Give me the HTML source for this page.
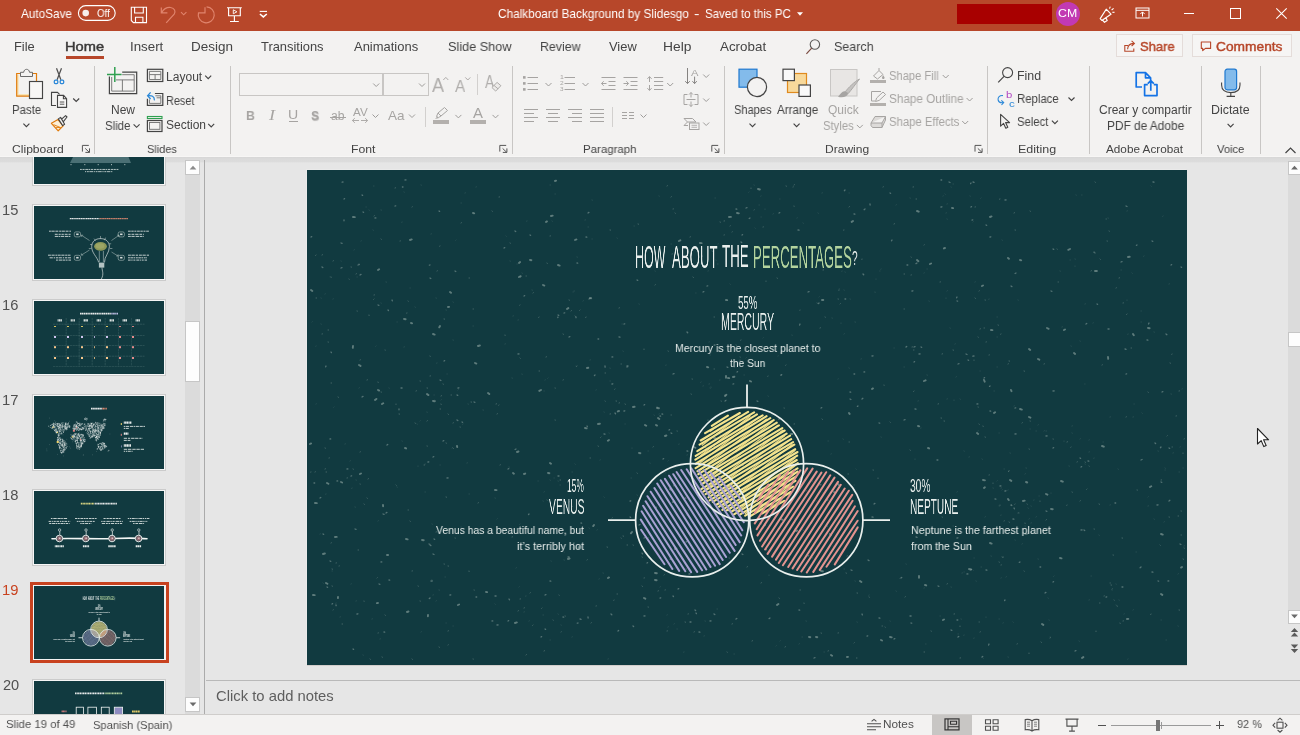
<!DOCTYPE html>
<html lang="en"><head><meta charset="utf-8"><title>PowerPoint</title><style>html,body{margin:0;padding:0}
body{width:1300px;height:735px;overflow:hidden;background:#E6E6E6;position:relative;font-family:"Liberation Sans",sans-serif}
.t{position:absolute;white-space:nowrap;transform-origin:0 50%;line-height:1;display:block;will-change:transform}
.r{position:absolute;display:block}
svg{overflow:visible}
</style></head><body>
<div class="r" style="left:0px;top:157px;width:1300px;height:5.5px;background:linear-gradient(#D6D6D6,#DADADA 25%,#DCDCDC 75%,#E6E6E6);"></div>
<div class="r" style="left:307px;top:170px;width:880px;height:495px;background:#113A40;overflow:hidden;box-shadow:-1px -1px 0 #EAEAEA, 0 1px 0 #D2CDCB"><svg class="r" style="left:0;top:0" width="880" height="495" viewBox="0 0 880 495"><g fill="none" stroke="#9FB2AD" stroke-linecap="round"><path stroke-width="0.8" opacity="0.25" d="M707 236l0.2 -0.1M712 343l0.3 -0.0M650 322l0.3 -0.2M206 146l0.3 -0.1M496 53l0.3 0.2M361 457l0.2 -0.1M876 298l0.2 -0.0M324 308l0.4 0.0M763 90l0.3 0.0M531 209l0.2 -0.1M154 357l0.2 0.0M237 221l0.2 0.0M856 46l-0.2 0.3M608 289l0.0 0.3M315 154l0.2 -0.0M643 158l0.2 0.1M792 365l0.2 0.3M423 114l0.2 0.2M56 485l0.2 0.1M864 224l0.4 0.1M120 225l0.3 0.1M701 487l0.3 0.1M9 234l0.2 -0.1M614 258l-0.3 0.1M573 101l-0.2 0.0M25 401l0.3 0.0M353 397l0.2 -0.2M26 129l0.2 -0.1M639 128l-0.0 0.3M620 99l0.2 -0.0M453 282l0.2 -0.1M139 140l0.3 0.1M617 418l0.3 -0.1M811 299l0.3 0.2M673 201l0.2 -0.0M9 176l-0.1 0.2M297 327l0.2 0.2M851 281l0.3 0.1M526 376l0.1 0.3M401 101l0.3 -0.1M655 403l0.4 -0.1M238 210l0.2 -0.1M162 324l0.3 0.0M188 328l0.3 0.1M343 77l-0.2 0.1M74 40l0.4 0.1M120 242l0.1 0.3M727 330l-0.3 0.1M841 327l0.2 -0.2M454 26l-0.2 0.1M367 454l0.3 -0.2M59 37l0.2 -0.0M633 446l0.3 0.0M292 409l0.2 -0.1M79 112l0.4 0.1M694 408l0.2 -0.1M719 298l0.4 0.1M67 16l-0.4 0.0M140 204l0.2 0.0M690 357l0.2 -0.1M268 294l0.2 0.2M657 281l0.2 0.1M473 471l0.2 -0.2M515 23l0.3 -0.1M775 25l-0.3 0.0M241 208l-0.2 0.2M199 66l0.2 0.2M65 449l0.3 -0.1M646 14l0.4 -0.0M768 89l0.3 0.1M443 358l-0.0 0.2M731 389l0.3 0.1M619 474l-0.3 0.0M127 225l0.2 0.0M499 451l0.3 0.1M243 470l0.3 0.0M283 190l0.3 -0.1M133 295l0.2 -0.0M455 176l0.2 -0.1M814 100l0.3 0.0M654 449l0.3 0.1M829 382l0.3 -0.0M156 254l-0.3 0.2M753 101l0.3 0.1M548 411l0.2 0.1M203 91l0.3 0.1M821 489l-0.2 0.1M778 134l0.3 -0.1M786 153l0.2 -0.1M875 219l0.2 -0.1M410 439l0.4 0.0M676 488l0.3 0.2M360 445l0.2 -0.1M158 23l0.3 -0.1M154 33l0.3 -0.0M826 247l0.4 -0.1M583 451l0.2 0.1M202 297l0.3 0.1M393 294l0.4 -0.0M695 70l0.3 0.2M49 431l0.3 -0.1M366 304l0.3 0.2M611 231l0.3 -0.1M548 152l0.4 0.1M772 471l0.3 0.2M215 204l0.1 0.3M245 51l0.3 0.2M871 404l0.3 -0.2M731 255l0.3 -0.2M778 214l-0.2 0.0M358 303l0.3 -0.1M44 414l0.2 -0.1M457 261l0.2 -0.1M265 302l0.3 0.0M663 26l0.2 0.1M694 318l0.4 -0.1M662 287l0.3 -0.1M550 452l0.2 0.1M285 69l0.2 -0.0M230 362l0.2 0.1M90 152l0.2 0.0M485 165l0.1 0.3M266 122l0.2 0.0M97 177l0.3 -0.1M536 269l0.3 0.2M682 129l-0.1 0.3M859 470l0.4 0.0M844 16l0.2 0.2M364 74l0.3 0.0M666 400l0.2 0.2M524 284l0.2 -0.1M290 360l0.3 -0.2M589 35l0.3 -0.2M495 467l0.3 0.0M439 188l0.2 -0.2M125 354l0.2 0.1M129 431l0.3 -0.2M671 261l0.2 -0.1M352 26l0.2 0.1M409 90l0.1 0.2M835 243l0.2 0.2M834 141l0.3 -0.0M54 71l0.2 -0.1M267 121l0.4 -0.0M611 375l0.3 -0.0M359 195l-0.1 0.3M862 114l0.3 -0.1M408 28l0.3 -0.0M674 28l-0.2 0.2M402 214l0.4 -0.1M796 272l0.3 -0.0M542 23l0.3 -0.0M169 17l0.3 -0.1M303 211l0.3 -0.0M465 245l0.0 0.4M190 349l0.2 -0.2M330 325l0.3 0.2M538 102l0.2 0.1M160 293l0.3 -0.1M589 421l0.3 0.2M18 124l0.2 -0.1M14 154l0.2 0.1M768 96l-0.0 0.3M130 193l-0.3 0.1M521 271l0.3 -0.0M871 456l0.2 0.1M146 170l0.3 0.1M281 57l0.4 0.0M361 291l0.2 -0.2M535 101l-0.1 0.3M210 94l0.2 0.0M636 26l0.2 -0.1M301 489l0.3 -0.1M396 216l0.3 -0.1M471 186l0.2 -0.1M5 152l0.2 -0.2M236 331l0.2 0.1M653 229l0.3 0.2M111 296l-0.0 0.3M327 56l0.3 0.0M316 181l0.2 0.3M469 476l0.2 -0.2M149 70l-0.2 0.2M248 24l0.3 0.0M282 358l0.3 0.2M640 229l0.3 -0.1M858 300l0.2 0.0M278 50l0.4 -0.1M668 112l0.2 -0.1M697 299l0.3 -0.0M812 430l0.2 0.1M490 48l0.2 -0.1M416 385l0.2 -0.0M469 288l0.4 0.1M825 103l0.2 0.2M742 450l0.2 0.1M463 278l-0.2 0.3M198 174l0.3 -0.1M391 379l0.3 0.1M166 156l0.3 -0.0M302 263l0.2 0.1M332 134l0.2 0.1M209 398l0.3 -0.2M462 405l-0.0 0.4M71 351l0.3 -0.2M389 123l-0.2 0.0M114 462l0.3 -0.2M837 86l-0.3 0.2M747 406l-0.3 0.3M809 414l0.2 0.1M803 335l0.3 -0.1M270 87l0.3 0.1M48 337l0.3 0.1M269 196l0.2 -0.0M678 347l0.3 -0.2M549 299l0.2 0.2M52 218l0.3 -0.2M237 322l0.3 -0.2M348 101l0.2 0.1M769 25l0.2 0.1M640 121l0.3 -0.2M711 130l0.2 0.1M427 484l0.3 0.0M397 278l0.2 -0.1M118 294l0.3 -0.0M459 313l0.0 0.3M404 217l0.2 0.1M782 282l0.3 -0.1M403 218l0.4 0.1M724 336l0.2 0.1M95 52l-0.1 0.3M743 467l0.3 0.0M512 127l0.2 -0.2M537 120l0.2 0.1M411 94l-0.4 0.0M784 406l0.3 0.0M646 356l0.3 0.0M456 168l0.2 -0.2M757 271l0.0 0.3M171 176l0.2 0.1M243 15l0.4 -0.0M847 162l0.3 0.1M820 130l0.0 0.3M448 88l-0.3 0.2M97 22l0.2 0.1M113 251l0.2 -0.2M69 176l-0.2 0.2M253 315l0.3 -0.0M211 150l0.4 -0.1M394 212l-0.2 0.3M574 267l0.2 0.1M599 394l0.2 0.1M593 408l-0.3 0.3M841 336l0.4 -0.1M765 256l0.3 -0.1M377 482l-0.3 0.1M285 30l0.3 0.1M724 353l0.3 -0.1M205 208l0.3 0.1M475 77l0.2 0.2M773 269l0.3 -0.2M213 354l-0.3 0.3M803 247l0.4 -0.1M827 234l0.2 -0.0M146 132l0.3 0.2M603 28l0.3 0.1M547 315l0.4 0.0M554 189l0.3 -0.1M854 450l0.3 0.0M773 171l0.2 0.1M73 469l0.3 -0.1M310 68l0.3 0.2M647 230l-0.0 0.4M762 296l0.3 0.1M542 198l0.2 0.1M452 35l0.3 0.0M379 345l0.3 0.1M532 119l0.3 -0.1M511 43l0.3 0.2M124 64l0.3 -0.1M27 237l-0.2 0.2M293 290l0.2 -0.1M220 51l-0.3 0.1M737 261l0.3 -0.2M765 263l0.2 0.1M739 261l0.4 -0.0M368 298l0.2 0.1M380 285l0.3 -0.1M648 174l0.2 -0.1M139 453l0.2 -0.0M146 456l0.2 -0.0M45 318l-0.2 0.4M43 291l0.3 -0.2M257 382l0.2 0.1M257 390l0.3 0.1M244 391l0.2 0.1M516 323l0.4 -0.1M490 348l0.2 -0.0M509 331l0.4 -0.0M666 52l0.2 -0.2M639 43l0.3 -0.1M640 49l0.2 0.1M296 403l0.3 0.1M877 376l0.3 -0.1M695 320l0.2 -0.2M694 345l-0.1 0.3M692 336l0.3 0.1M729 261l0.3 -0.0M723 259l0.2 -0.0M353 417l0.3 -0.2M352 244l0.2 -0.1M347 245l0.3 0.2M289 220l0.2 -0.1M303 198l0.1 0.3M392 323l0.3 0.2M82 218l0.2 0.1M741 428l0.3 0.2M706 452l0.2 0.2M447 15l0.2 0.1M442 22l-0.2 0.2M14 128l0.2 0.1M692 263l0.2 0.0M525 148l0.3 0.1M534 153l0.0 0.3M690 311l0.2 -0.2M703 283l0.3 0.1M686 318l0.3 0.1M718 304l0.3 -0.2M764 176l0.2 0.1M755 157l0.3 -0.1M138 407l0.3 0.0M132 420l0.4 0.1M254 455l0.2 0.1M251 444l0.3 0.2M126 425l0.3 -0.1M699 407l0.3 -0.2M16 413l0.2 0.2M370 398l0.2 -0.1M692 449l0.3 -0.0M696 453l0.2 -0.1M617 103l0.2 -0.1M318 254l0.2 -0.0M297 242l0.2 0.1M569 109l-0.0 0.2M568 122l0.1 0.4M574 99l-0.1 0.2M265 467l0.2 -0.1M19 324l-0.3 0.1M873 277l0.2 -0.1M858 298l0.3 0.2M276 131l0.3 -0.2M23 107l0.3 0.1M675 289l0.3 0.2M393 310l0.3 -0.1M343 293l0.1 0.2M372 274l-0.1 0.3M325 278l0.0 0.2M341 281l0.3 -0.0M66 60l0.3 0.2M62 40l0.3 0.2M701 320l-0.1 0.2M847 349l0.3 0.2M857 352l0.3 -0.2M667 468l-0.1 0.3M657 465l-0.1 0.3M398 451l0.3 0.1M397 466l0.3 -0.1M455 376l0.4 -0.1M478 348l0.4 -0.1M487 348l0.1 0.2M411 74l0.2 -0.1M256 329l0.4 0.0M231 311l0.2 0.0M423 310l0.3 -0.1M413 319l0.2 0.3M427 329l-0.2 0.1M826 440l0.3 -0.2M817 444l0.2 -0.1M821 164l-0.1 0.3M834 152l0.3 0.0M114 15l0.3 0.1M448 58l0.2 0.2M134 230l0.2 -0.2M128 230l0.2 0.2M151 220l0.2 -0.2M236 445l0.4 0.0M219 426l-0.4 0.1M212 417l0.2 -0.2M620 205l0.3 0.1M649 207l0.3 -0.2M215 103l0.3 0.2M403 185l0.4 -0.0M402 172l0.3 -0.1M477 284l0.3 0.0M473 270l0.3 -0.1M95 271l0.2 0.1M110 254l0.2 0.1M217 442l0.3 -0.1M222 451l0.2 -0.1M416 241l0.4 -0.1M414 243l0.4 0.0M419 230l0.3 0.0M13 364l0.2 -0.1M690 147l0.3 0.0M690 167l0.3 0.0M329 360l-0.2 0.1M418 295l-0.1 0.2M29 433l-0.1 0.3M33 447l0.3 -0.1M461 226l0.3 0.2M721 338l0.3 0.2M729 347l0.3 -0.2M732 326l0.2 -0.0M744 323l-0.0 0.2M247 308l0.2 0.0M243 310l0.3 0.2M251 311l0.3 0.1M562 425l-0.1 0.2M537 399l0.3 0.0M820 41l0.3 -0.1M801 48l0.3 0.1M787 288l-0.1 0.3M778 294l0.2 0.1M782 270l0.2 -0.1M517 482l0.3 -0.0M492 474l0.3 -0.2M437 205l0.3 0.0M413 210l-0.4 0.1M368 398l0.2 -0.1M587 178l0.2 0.0M597 197l0.3 0.0M118 322l0.3 0.0M90 317l0.2 0.1M74 133l0.2 0.1M103 118l0.2 0.0M108 137l0.3 0.2M129 128l0.3 0.1M145 278l0.3 -0.2M622 131l0.1 0.2M493 350l0.1 0.2M49 310l0.3 0.1M872 302l0.4 -0.0M866 283l0.3 -0.1M458 39l-0.0 0.3M454 47l0.2 0.0M466 44l0.3 -0.2M809 435l0.2 0.1M805 420l0.3 -0.0M782 430l0.3 -0.1M38 274l0.3 -0.1M687 221l0.3 0.0M690 197l0.3 0.0M640 34l0.3 -0.1M638 24l0.2 0.2M644 17l0.2 0.1M679 447l0.0 0.3M651 464l0.3 0.0M705 362l-0.1 0.2M722 349l0.3 -0.2M718 356l0.4 0.1M715 374l0.3 -0.2M708 370l0.2 0.1M433 283l0.2 -0.1M427 362l0.3 -0.1M411 365l0.1 0.2M684 386l0.3 0.1M657 402l0.2 -0.0M473 29l-0.2 0.0M669 411l0.2 0.1M674 397l0.4 -0.0M667 388l0.2 -0.0M176 240l0.4 0.1M161 234l0.3 0.1M537 164l0.3 -0.2M543 129l0.3 0.1M225 120l0.3 0.1M34 91l0.2 0.1M50 107l0.2 0.0M47 80l0.3 -0.2M370 459l0.2 -0.0M644 417l0.3 0.1M188 434l0.2 0.2"/><path stroke-width="1.0" opacity="0.36" d="M739 350l0.5 -0.4M498 98l0.4 -0.3M237 481l0.6 -0.3M8 302l0.4 -0.2M542 37l0.5 -0.4M265 336l0.2 0.4M819 247l0.4 -0.2M379 399l0.6 0.1M597 139l0.4 0.0M710 474l0.4 -0.2M860 266l0.3 -0.3M444 18l0.0 0.5M250 358l0.5 0.2M108 253l0.5 0.3M470 108l0.5 0.3M205 367l0.6 -0.2M812 108l0.6 -0.2M300 377l0.6 0.2M717 201l0.6 0.2M9 128l0.6 0.0M370 261l0.4 0.1M493 140l-0.1 0.3M512 358l0.1 0.4M420 482l0.3 0.2M800 71l0.5 0.1M123 206l0.5 -0.1M603 280l0.4 0.3M219 485l0.5 -0.4M105 401l0.5 -0.1M133 76l-0.4 0.2M289 436l0.4 -0.1M103 351l0.3 0.4M813 453l0.2 0.5M415 362l0.5 0.3M162 108l0.5 0.0M693 29l-0.6 0.2M723 41l0.5 0.3M364 245l0.4 0.0M331 54l0.6 0.2M555 89l-0.1 0.5M280 390l0.4 -0.3M454 354l0.5 0.1M320 375l0.6 0.0M153 257l0.4 0.1M270 196l-0.4 0.5M609 29l0.6 -0.0M365 84l0.4 -0.1M634 248l0.6 0.1M778 292l0.5 0.3M707 43l0.6 -0.3M692 392l0.4 0.2M531 129l0.5 0.1M478 392l0.5 -0.1M877 378l0.4 0.2M368 43l0.4 0.3M335 387l0.4 0.2M598 427l0.4 -0.3M499 321l0.4 -0.2M824 178l0.6 0.0M773 331l0.4 -0.3M130 101l0.4 -0.2M262 332l0.4 -0.3M682 185l0.4 -0.1M53 190l0.4 -0.2M239 187l0.5 -0.2M21 172l0.5 0.1M164 232l0.6 0.1M120 251l0.4 -0.3M533 134l0.4 -0.4M479 195l-0.4 0.3M70 408l0.3 -0.3M701 194l0.4 -0.2M816 133l0.5 -0.1M765 322l0.4 0.2M863 193l0.5 0.2M154 53l0.5 -0.3M360 16l0.5 -0.3M484 325l-0.4 0.2M105 37l0.3 -0.2M637 251l0.6 0.1M312 138l0.5 -0.2M93 71l0.4 -0.1M810 436l0.5 0.2M874 365l0.4 0.0M57 431l0.1 0.4M472 428l0.4 0.3M88 18l0.6 -0.2M63 489l0.4 0.3M743 468l0.5 -0.3M330 303l0.4 0.3M305 348l0.4 -0.3M341 368l0.5 -0.1M248 218l0.4 0.1M78 180l0.3 0.1M407 199l0.5 -0.0M571 308l0.0 0.5M788 12l0.4 0.3M583 252l0.3 0.3M364 27l0.4 -0.3M366 39l0.5 -0.1M795 195l0.4 -0.2M720 334l0.3 0.2M605 177l0.5 -0.1M830 320l0.5 0.1M75 487l0.4 0.2M74 69l0.4 0.3M640 414l0.5 -0.3M789 461l0.0 0.6M516 100l0.6 -0.1M537 60l-0.5 0.1M607 180l-0.5 0.0M477 238l0.4 0.1M238 360l0.4 0.0M815 368l0.6 0.1M105 489l0.4 0.3M78 445l0.4 0.3M431 292l0.6 0.0M348 115l0.4 -0.3M678 130l0.5 0.1M422 388l0.4 0.1M672 121l0.3 -0.2M695 387l0.5 0.3M141 244l0.5 0.4M283 288l0.5 0.0M673 462l0.4 -0.2M607 221l-0.4 0.5M702 352l0.5 0.3M587 54l0.6 -0.3M433 190l0.0 0.4M240 93l0.3 0.5M816 451l0.5 -0.1M254 462l0.3 -0.2M514 463l0.6 0.2M113 211l0.5 0.1M653 488l0.6 -0.1M384 224l0.4 0.2M678 267l0.5 0.2M737 194l0.5 -0.2M668 37l0.5 -0.1M256 164l0.5 0.3M192 235l-0.3 0.2M248 250l0.4 0.1M132 477l0.5 0.3M677 158l0.5 -0.0M21 160l0.6 0.0M240 330l0.3 0.2M413 253l-0.5 0.2M453 153l0.5 0.1M792 334l0.6 0.3M532 120l-0.1 0.4M89 315l0.3 0.3M780 319l-0.4 0.4M337 408l0.5 -0.1M576 17l0.4 -0.2M865 184l-0.2 0.4M141 396l0.6 0.1M232 147l-0.3 0.5M844 444l-0.3 0.6M577 215l0.1 0.4M167 420l0.4 0.1M101 340l0.5 0.0M24 213l0.6 -0.0M417 333l0.4 -0.1M171 333l0.5 -0.3M31 227l0.5 0.3M750 79l0.3 0.2M303 60l0.6 0.1M760 335l-0.2 0.4M401 250l0.0 0.5M350 237l0.4 0.1M203 73l0.4 0.2M57 334l0.4 0.3M453 271l0.4 -0.1M148 368l0.4 0.1M361 181l0.4 0.2M704 335l0.4 -0.2M256 210l0.4 -0.2M279 147l-0.3 0.6M141 475l0.3 -0.2M505 311l0.4 -0.0M433 187l0.3 0.1M445 471l0.6 -0.3M312 233l0.6 -0.2M708 60l0.6 0.1M434 170l-0.4 0.2M787 359l0.5 0.1M109 221l0.5 -0.2M566 300l0.5 0.1M631 234l0.6 -0.2M462 328l0.5 -0.2M872 221l0.5 -0.1M562 427l0.4 0.2M550 488l-0.6 0.0M53 282l0.4 -0.2M40 308l0.5 -0.1M461 206l-0.2 0.4M872 440l0.6 0.1M635 347l0.5 0.2M454 413l0.5 -0.3M547 473l0.3 -0.3M190 244l0.5 -0.3M807 430l0.3 0.2M751 112l0.5 -0.0M803 413l0.4 -0.0M853 375l0.3 0.3M360 461l0.5 -0.1M668 128l0.5 0.4M531 463l0.5 -0.1M611 338l0.3 -0.2M462 260l0.4 0.4M542 272l0.4 -0.0M520 356l0.6 0.2M146 253l0.4 -0.2M398 272l0.6 0.1M405 81l0.4 0.2M166 489l0.4 0.1M809 118l0.4 -0.2M385 209l0.5 0.1M869 246l0.5 -0.1M543 361l-0.3 0.5M232 201l0.6 0.0M314 194l0.4 0.0M129 362l0.6 -0.2M92 244l0.6 0.1M120 276l0.4 0.1M459 111l0.0 0.4M198 165l0.1 0.5M414 231l0.5 0.2M123 186l0.2 0.4M139 327l0.6 0.2M71 463l0.4 -0.1M841 222l0.3 0.4M606 17l0.6 -0.1M383 67l0.5 -0.2M671 237l0.4 0.1M298 231l0.3 0.2M478 477l0.5 -0.3M9 85l-0.4 0.5M386 107l0.4 0.5M407 147l0.5 -0.0M460 151l0.5 -0.2M213 188l0.3 0.3M50 141l0.4 0.1M193 295l0.4 -0.2M395 86l0.6 0.1M425 454l0.5 -0.2M617 482l0.6 0.0M337 179l0.0 0.6M4 302l-0.4 0.1M440 397l0.5 -0.3M291 276l0.5 0.3M294 267l-0.4 0.4M243 66l0.5 -0.1M760 272l0.5 -0.2M764 277l-0.2 0.3M635 184l0.6 -0.2M646 180l0.6 0.2M141 461l0.5 -0.2M61 309l0.5 -0.3M60 328l0.4 0.3M243 378l0.5 0.2M266 378l0.4 0.3M511 344l0.6 -0.1M505 353l-0.4 0.4M515 249l0.5 0.4M310 424l0.5 0.0M307 430l-0.2 0.4M541 304l0.4 0.0M876 389l0.6 0.3M697 351l0.4 -0.2M746 269l0.4 0.1M723 251l0.4 0.1M715 253l0.4 -0.3M722 279l0.5 0.2M341 437l0.5 0.1M802 61l0.4 0.2M793 89l0.4 0.4M784 101l0.5 -0.3M788 83l0.4 0.0M308 219l-0.4 0.3M298 203l0.6 -0.0M89 234l-0.0 0.5M60 210l0.5 -0.2M74 222l0.5 0.1M71 212l0.2 0.5M734 472l0.5 0.4M51 380l0.6 -0.0M32 396l0.4 -0.1M15 164l0.5 -0.1M672 254l0.3 0.4M676 256l0.2 0.5M510 133l0.5 0.3M513 158l0.5 -0.2M686 313l-0.0 0.4M702 301l-0.4 0.3M111 416l0.4 0.2M113 431l0.4 0.1M223 423l0.4 -0.3M258 446l0.4 0.1M235 438l-0.4 0.4M137 394l0.5 0.1M125 410l0.3 0.2M717 401l0.3 0.2M25 399l0.6 0.2M29 393l0.5 -0.1M25 416l0.5 0.2M357 405l0.4 -0.3M351 421l0.5 -0.2M358 420l0.4 -0.1M335 416l0.5 0.4M722 483l-0.0 0.6M617 75l0.3 -0.2M604 87l0.3 0.2M633 112l0.5 -0.1M309 231l0.6 0.1M284 453l0.4 -0.3M246 450l0.3 0.2M18 299l0.5 -0.2M865 277l0.4 -0.0M268 146l0.4 0.3M264 141l0.5 -0.4M42 109l0.2 0.3M26 91l0.5 -0.3M15 85l0.6 -0.3M24 107l0.4 0.2M49 104l0.5 -0.3M682 305l0.4 -0.1M393 282l0.4 0.1M399 290l0.3 -0.3M388 302l0.3 0.3M346 277l0.4 -0.3M262 130l0.5 0.2M273 140l-0.4 0.4M67 46l0.4 -0.3M693 335l0.0 0.4M702 301l-0.5 0.2M871 346l0.6 0.0M862 347l0.5 0.1M874 341l0.5 0.1M653 456l-0.0 0.6M624 461l0.4 0.2M647 444l0.6 -0.1M387 462l0.4 -0.2M417 51l0.6 -0.1M413 52l0.5 0.2M423 56l0.3 -0.2M425 62l0.3 -0.2M409 302l0.4 0.1M793 433l-0.5 0.0M820 144l-0.4 0.5M417 65l0.4 -0.1M144 225l0.5 0.0M120 218l0.6 0.1M136 214l0.4 0.2M134 226l0.6 -0.3M133 239l0.6 -0.0M134 234l0.2 0.5M505 384l0.4 0.0M505 388l0.5 -0.2M252 425l0.2 0.3M217 438l0.5 -0.2M226 455l-0.4 0.4M213 107l0.4 0.2M213 135l-0.3 0.2M429 175l0.4 0.2M708 334l-0.2 0.3M464 279l0.5 0.2M487 254l0.6 -0.1M479 269l-0.6 0.1M185 41l0.4 0.3M192 27l0.6 -0.1M211 441l0.5 -0.3M213 429l0.6 -0.1M440 238l0.2 0.5M418 225l0.3 0.2M24 373l0.4 -0.2M166 139l0.5 0.0M137 149l0.6 0.1M673 159l0.5 -0.2M694 164l-0.4 0.2M679 172l0.4 -0.1M691 155l0.5 0.2M671 167l0.3 0.2M316 366l0.6 0.2M314 368l0.3 0.2M326 375l0.4 0.2M413 265l0.4 0.2M415 297l0.5 0.0M35 454l0.6 0.0M26 440l0.3 -0.2M466 251l-0.4 0.4M474 205l-0.0 0.6M711 343l0.5 -0.1M733 331l0.0 0.4M257 336l0.5 -0.3M253 310l0.6 -0.0M540 386l0.4 -0.2M539 403l0.5 0.2M550 423l0.6 0.1M799 49l0.4 0.0M782 296l0.3 0.2M770 292l0.4 -0.2M521 481l0.5 -0.2M427 197l0.5 0.1M369 389l0.4 0.0M373 375l0.4 -0.0M368 394l0.6 0.0M117 295l0.6 -0.0M62 145l0.1 0.6M67 129l-0.4 0.4M67 125l0.5 -0.1M100 143l-0.4 0.1M101 131l0.3 0.2M575 456l0.5 0.0M578 457l0.3 0.2M139 273l0.5 0.2M146 278l0.4 0.5M597 104l0.6 0.0M604 105l0.4 -0.1M493 420l0.4 0.0M497 433l0.1 0.5M488 359l0.3 0.5M496 360l0.3 0.2M53 314l0.3 0.1M19 302l0.6 0.0M46 299l0.4 0.2M876 283l0.0 0.4M877 269l0.4 -0.2M447 40l0.3 -0.2M487 36l0.1 0.4M456 57l0.4 -0.1M805 419l0.3 -0.2M797 426l0.4 -0.1M18 278l0.5 0.2M22 288l0.4 -0.1M702 191l0.6 0.1M667 190l-0.0 0.4M672 452l0.4 -0.0M696 387l0.5 0.1M718 353l0.1 0.5M429 282l0.4 0.0M450 275l0.6 -0.1M303 244l0.6 -0.1M318 234l0.5 0.3M381 340l0.3 0.1M479 16l0.5 0.2M486 17l0.3 -0.1M487 15l0.5 -0.3M694 395l0.4 -0.1M189 234l0.6 -0.2M518 147l0.4 0.2M226 123l0.4 -0.3M219 106l0.4 -0.0M52 94l0.5 0.2M44 97l0.5 0.1M806 385l0.5 0.1M804 415l0.6 0.1M378 452l0.6 0.2M381 444l0.4 -0.1M854 310l0.6 -0.1M162 401l0.1 0.6"/><path stroke-width="1.3" opacity="0.48" d="M398 277l0.7 0.5M774 297l0.7 -0.3M185 451l0.8 -0.1M677 208l0.6 -0.3M651 194l1.0 -0.3M603 446l1.1 -0.0M13 328l0.8 -0.5M774 360l1.1 -0.1M279 67l0.8 0.1M77 462l0.7 0.1M604 453l0.7 0.2M739 341l0.9 0.3M493 154l-0.4 1.1M472 249l-0.0 0.6M474 205l0.7 -0.4M382 404l0.9 -0.1M733 397l0.7 0.0M68 48l0.9 -0.1M706 349l0.9 0.1M565 347l1.1 0.2M650 127l-0.4 0.8M557 202l0.7 -0.1M312 167l1.0 0.2M380 281l0.8 0.2M320 196l1.0 -0.2M20 417l0.6 0.3M127 369l0.7 0.3M459 379l0.4 0.7M148 101l0.8 0.5M55 227l1.0 -0.6M389 443l0.4 0.6M482 404l1.1 -0.1M834 397l-0.9 0.8M396 122l0.8 -0.4M851 411l0.6 0.2M209 279l-0.9 0.5M262 167l0.8 -0.4M608 239l1.0 0.2M291 169l0.7 0.0M683 67l0.9 -0.2M818 179l1.1 0.3M122 374l0.9 0.3M304 444l0.8 0.7M738 423l0.9 -0.6M48 359l1.0 0.4M768 481l0.9 -0.4M151 218l1.0 -0.2M126 384l1.0 0.5M661 190l0.6 0.3M801 159l1.1 0.0M679 55l0.7 0.3M572 253l0.7 0.2M80 275l0.7 -0.5M538 20l-0.6 0.7M708 238l0.7 -0.2M36 12l-0.9 0.1M271 453l-0.7 0.2M243 411l0.8 0.1M709 103l-0.9 0.5M140 308l1.1 -0.1M323 331l0.7 -0.2M779 154l0.7 -0.5M547 204l0.7 0.0M23 269l0.7 -0.1M713 392l-0.7 0.4M650 368l1.0 -0.2M46 479l0.6 0.4M94 218l1.1 -0.0M854 277l-0.5 0.7M317 154l0.7 -0.2M150 250l0.8 0.6M720 364l0.6 -0.4M74 392l0.8 -0.1M123 375l0.9 0.6M607 192l0.6 -0.3M707 338l0.4 0.8M514 238l0.8 -0.3M332 355l1.0 -0.5M364 263l0.8 0.3M223 65l0.6 0.3M830 75l-0.6 0.3M585 70l-0.5 0.8M76 344l1.1 0.4M123 95l-0.6 0.2M400 116l0.7 -0.2M777 360l0.7 0.5M92 239l0.0 0.8M34 73l1.1 0.4M846 12l1.0 0.2M746 278l0.7 -0.3M126 287l0.8 -0.3M353 246l0.6 0.1M704 116l0.9 0.6M567 334l0.9 -0.6M190 455l1.1 -0.1M834 290l1.1 -0.5M337 368l0.9 -0.3M547 44l0.9 0.2M597 250l1.0 -0.4M201 299l0.8 -0.3M874 97l0.6 0.3M429 449l0.8 -0.6M407 276l0.4 0.8M650 131l0.6 0.2M340 393l0.6 -0.3M251 147l-0.2 0.6M222 344l-0.5 0.6M862 331l0.9 -0.7M167 232l0.9 0.3M25 434l0.6 -0.3M781 291l0.8 0.2M814 92l1.0 -0.4M491 60l1.1 0.2M845 71l0.8 0.3M859 164l0.9 0.7M40 299l0.9 -0.1M682 474l-0.4 1.1M371 419l0.7 -0.4M861 411l0.8 -0.1M501 386l0.6 -0.4M280 256l0.4 0.7M454 353l0.5 -0.4M520 330l0.8 -0.1M37 29l0.6 -0.3M551 236l-0.6 0.4M683 216l-0.5 0.4M121 292l0.8 -0.2M281 43l0.9 -0.6M251 145l0.7 0.4M366 204l1.0 -0.4M55 25l0.6 0.4M474 183l1.0 -0.0M472 80l-0.1 0.7M492 440l0.7 0.1M790 134l0.6 0.3M380 162l0.7 0.8M563 34l0.1 1.0M845 402l0.9 0.1M407 444l0.8 0.6M614 177l0.7 0.3M150 225l0.7 0.4M698 30l1.1 -0.1M683 241l0.7 0.1M746 79l0.7 0.4M270 93l0.7 0.1M79 343l0.9 -0.6M555 229l0.9 -0.7M746 412l0.6 -0.3M873 374l0.9 0.5M82 410l0.7 0.1M501 122l1.0 -0.4M24 182l0.4 0.6M208 61l0.7 0.5M19 196l-0.3 0.8M630 290l0.9 0.0M211 184l1.0 -0.1M197 78l0.7 -0.4M326 456l0.6 0.5M583 23l0.6 0.3M367 315l-0.1 0.8M855 222l0.8 -0.4M675 487l0.7 -0.5M744 121l0.9 0.3M137 191l0.7 -0.3M819 204l0.6 -0.2M664 37l0.5 -0.4M808 333l0.7 -0.0M384 302l0.1 0.7M594 408l0.7 -0.5M664 13l-0.4 0.6M132 41l0.6 0.4M53 105l1.0 -0.6M72 414l0.9 0.3M330 110l0.7 0.4M746 221l1.2 -0.1M561 390l1.0 0.6M864 95l0.7 -0.3M335 383l0.6 0.9M612 184l1.1 -0.1M311 461l0.6 -0.5M435 384l0.9 0.5M234 467l0.6 -0.4M609 367l1.1 0.3M274 353l0.6 0.1M349 337l0.3 0.8M297 264l1.0 0.2M356 289l0.7 -0.3M659 184l1.0 0.5M261 387l1.1 0.0M267 373l-0.5 0.7M665 50l0.7 -0.2M634 37l1.0 -0.2M543 229l0.9 0.5M543 222l0.7 0.1M513 315l0.9 -0.3M693 316l0.9 -0.1M704 335l0.8 0.5M708 264l1.1 -0.1M739 266l1.1 -0.1M353 428l0.7 -0.2M337 446l1.0 -0.1M787 82l0.2 0.6M355 244l0.7 0.1M320 197l0.9 -0.3M288 205l-0.6 0.6M305 187l0.8 -0.1M298 196l0.1 1.1M378 328l0.8 0.1M23 391l0.8 0.3M670 234l0.9 -0.1M538 129l0.7 0.0M123 428l-0.7 0.6M124 411l1.1 0.2M143 425l0.8 -0.2M238 459l0.6 0.4M238 425l0.9 -0.4M698 430l-0.4 0.5M600 95l0.8 0.0M610 93l-1.0 0.6M305 214l0.9 -0.2M337 235l0.7 -0.3M317 241l0.9 -0.2M556 104l0.7 0.8M273 449l1.1 0.3M256 447l0.7 0.1M281 447l0.1 1.0M7 313l0.7 -0.0M848 273l0.6 0.5M862 278l0.7 0.3M15 97l0.8 0.6M362 260l0.6 -0.3M269 147l0.0 0.7M282 129l1.0 -0.5M257 143l0.7 -0.2M37 50l-0.0 0.8M56 42l0.6 0.3M698 321l1.0 -0.2M644 460l0.8 0.4M650 450l0.8 -0.0M392 462l0.9 0.1M403 451l1.0 -0.1M383 452l1.0 -0.0M4 67l0.7 -0.4M474 354l0.8 0.2M435 65l0.6 -0.3M434 72l0.7 0.6M435 295l1.0 0.6M842 153l-0.5 1.0M840 170l0.9 0.2M558 39l-0.9 0.7M96 17l-0.6 0.0M88 36l0.7 -0.2M98 10l1.0 -0.1M443 48l-0.8 0.5M429 39l0.8 0.1M133 210l0.9 0.5M155 252l0.6 0.3M511 376l0.7 0.1M408 175l-0.9 0.1M688 329l0.9 0.2M201 451l0.7 -0.3M202 429l0.5 0.8M418 231l0.8 -0.3M16 364l0.7 0.3M323 347l0.6 0.4M419 287l0.8 -0.4M50 444l1.0 -0.2M29 435l0.1 0.7M450 231l0.9 0.3M251 306l1.0 -0.0M544 400l1.0 0.3M819 36l1.0 0.5M773 288l0.6 0.3M507 488l1.0 -0.3M430 202l0.6 -0.3M426 214l0.7 -0.2M420 197l0.8 0.4M379 372l0.9 -0.4M363 389l0.6 0.4M565 186l1.1 -0.2M599 177l0.7 -0.6M607 177l1.0 -0.4M81 140l0.5 0.6M85 130l0.3 0.8M71 135l0.9 0.3M123 108l0.8 0.5M560 466l0.7 -0.2M572 448l0.9 0.2M555 444l0.4 0.9M587 469l0.8 -0.4M136 271l0.8 -0.3M605 121l1.0 -0.2M463 448l-0.9 0.6M44 306l0.6 -0.2M30 311l0.7 -0.1M439 38l1.0 -0.3M472 43l0.8 -0.3M799 427l0.7 -0.2M667 186l-1.2 0.1M642 12l1.0 0.5M634 10l0.7 -0.0M666 12l1.1 0.3M651 467l0.7 -0.5M718 364l1.1 0.2M308 243l0.6 0.8M679 400l0.9 0.2M660 404l0.9 -0.1M512 133l-0.5 0.6M217 126l0.7 -0.3M51 95l1.1 -0.4M34 98l1.0 -0.3M815 417l0.9 -0.0M388 440l0.6 0.5M366 426l0.5 0.6M664 399l0.5 0.5M631 416l0.9 0.3M850 335l1.1 -0.2M854 312l0.8 0.3M188 426l1.1 0.0M169 427l0.7 0.0"/><path stroke-width="1.9" opacity="0.55" d="M701 88l0.9 0.8M638 78l-1.1 0.4M407 268l1.7 0.2M731 189l1.3 0.7M801 187l0.2 1.8M387 277l1.4 0.8M268 70l1.4 -0.6M20 313l1.4 0.8M722 179l1.2 1.0M854 424l1.3 0.9M100 442l1.5 -0.5M76 335l0.1 1.3M280 198l1.3 -0.2M248 11l1.1 -0.3M843 317l1.2 -0.7M283 128l1.2 0.2M610 41l1.7 0.7M301 408l1.0 -0.6M206 303l0.9 0.7M210 282l1.5 -0.5M826 164l0.8 1.2M767 183l1.1 0.9M151 435l1.1 -0.5M744 339l1.7 0.2M612 406l0.0 1.8M611 256l1.2 0.3M171 176l1.9 -0.5M71 100l1.1 -0.7M46 47l1.8 0.1M754 311l1.8 0.7M348 410l1.6 0.3M683 47l1.5 -0.6M121 445l-0.1 1.2M97 149l1.6 0.2M788 101l1.9 0.0M104 153l1.1 0.3M753 388l1.5 0.4M272 377l-0.5 1.1M99 369l1.6 0.4M443 211l1.0 0.5M133 156l-0.7 1.3M31 427l-0.1 1.1M46 176l-0.2 1.8M419 206l-0.0 1.8M19 413l1.4 0.8M621 278l1.1 0.4M514 401l1.9 0.2M704 220l0.5 1.2M234 220l-1.7 0.9M251 95l1.6 0.6M400 197l1.2 0.3M419 130l1.2 0.1M103 70l1.7 -0.6M338 255l1.2 0.8M820 449l1.3 -0.1M71 433l-1.1 0.1M52 195l1.5 0.9M181 223l1.3 1.1M115 370l1.7 0.2M713 239l1.8 0.6M3 274l1.1 -0.6M141 137l1.1 -0.1M217 304l1.2 -0.4M531 314l0.9 1.0M713 90l1.2 0.3M540 487l1.0 -0.1M821 87l1.7 -0.2M372 71l1.3 -0.7M212 93l1.1 -0.9M393 73l1.6 0.1M618 415l1.2 0.4M458 354l-0.2 1.4M675 116l1.0 -0.5M775 488l1.3 -0.9M236 115l1.3 0.6M502 467l1.3 0.2M168 193l1.3 0.6M261 389l1.6 -0.5M565 219l0.9 -0.6M291 254l1.9 -0.3M542 243l0.6 0.9M583 467l1.7 0.4M188 320l1.5 0.1M523 364l0.9 1.3M670 263l1.2 0.9M80 385l1.1 -0.0M484 264l1.3 0.0M278 258l1.6 0.4M302 270l-1.1 0.8M239 52l0.9 -0.6M244 46l1.7 -0.4M722 247l1.4 0.7M53 304l1.0 -0.5M645 38l1.1 0.1M527 322l1.1 0.9M875 397l-0.9 0.6M854 364l1.7 0.6M763 79l-1.7 0.8M350 238l1.9 0.3M358 266l1.4 -0.5M351 248l1.3 1.0M363 319l1.0 0.7M366 332l1.3 -0.8M75 234l1.2 -0.7M71 220l1.1 0.6M68 230l1.4 -1.1M735 454l1.3 0.9M28 367l1.7 -0.1M16 384l1.9 -0.5M451 19l1.8 0.5M687 243l1.1 -0.8M719 312l1.2 0.5M740 158l1.6 0.8M757 160l1.0 -0.5M6 425l1.7 0.1M337 428l1.3 0.7M348 403l1.8 0.2M326 237l1.6 -0.2M8 333l1.8 0.1M4 120l1.3 1.0M676 310l1.9 0.4M332 283l1.4 0.2M349 255l1.0 0.6M260 139l1.3 -0.9M703 310l1.3 0.9M701 329l0.7 1.1M636 450l1.0 -0.5M422 47l1.9 -0.1M241 303l1.4 0.2M243 293l1.0 0.7M404 297l-1.0 0.4M420 320l-1.7 0.9M841 158l1.6 0.3M546 51l-1.3 0.9M430 43l1.8 0.4M120 224l1.4 1.1M126 231l1.8 0.3M489 361l1.1 -0.4M617 211l1.6 -0.7M677 318l0.9 -0.7M166 43l1.2 0.3M98 278l1.1 0.4M208 453l1.8 -0.6M418 226l1.4 -1.2M143 122l1.0 0.8M126 164l1.6 0.6M684 160l1.4 0.1M325 362l-1.1 1.3M287 355l-0.8 1.1M716 331l1.7 -0.4M739 324l1.4 0.7M553 411l1.4 1.0M795 276l1.8 0.7M509 467l1.3 0.2M524 485l1.1 0.7M421 208l1.2 0.1M426 207l1.4 -0.3M368 379l1.5 -0.6M574 470l1.0 0.5M150 276l0.2 1.1M623 94l1.1 -0.5M610 90l1.4 1.2M470 435l1.4 -1.0M474 349l1.6 0.8M34 312l1.1 0.5M677 210l0.7 1.7M312 241l-1.2 0.4M662 399l1.7 0.7M683 373l1.6 0.6M515 130l1.3 0.0M212 107l1.7 -0.8M223 90l1.4 0.2M179 422l1.1 0.1"/></g><path d="M404.8 255.8 L420.9 245.6 M398.1 263.2 L432.9 243.0 M393.7 270.5 L441.1 241.9 M392.6 274.6 L447.1 242.3 M390.3 281.2 L449.9 244.3 M388.7 285.9 L455.6 245.4 M388.4 289.6 L459.6 246.2 M388.8 293.6 L463.3 248.2 M388.6 298.1 L466.7 250.1 M390.5 301.1 L469.8 252.7 M391.3 304.1 L471.9 255.3 M391.9 308.4 L475.3 258.1 M393.0 311.1 L477.7 260.5 M394.5 314.4 L479.6 263.6 M394.3 319.1 L483.0 265.6 M396.3 321.6 L484.2 269.2 M398.6 324.1 L486.1 272.1 M401.5 327.3 L487.3 274.6 M402.6 330.4 L488.2 279.2 M405.7 331.8 L490.5 282.0 M409.9 334.5 L490.2 285.7 M412.1 336.7 L489.8 290.0 M415.3 339.8 L490.9 293.2 M419.7 340.3 L490.5 298.3 M423.8 342.0 L490.6 301.7 M426.6 344.7 L488.8 306.6 M432.5 344.9 L488.4 310.9 M438.2 345.6 L486.1 316.7 M443.7 345.9 L483.8 322.0 M454.9 343.5 L477.2 330.8" fill="none" stroke="#F5E38D" stroke-width="2.1" stroke-linecap="round" opacity="1"/><path d="M403.3 261.3 L417.6 251.3 M395.3 275.2 L432.3 246.3 M393.8 285.4 L443.1 245.9 M391.7 293.9 L452.2 246.8 M391.0 301.5 L459.3 249.2 M394.8 307.7 L465.2 251.8 M395.9 313.0 L470.7 255.4 M398.3 319.7 L475.6 260.2 M401.9 324.5 L477.7 265.7 M405.6 329.1 L481.5 271.0 M412.1 332.5 L485.1 274.6 M415.5 337.0 L488.0 280.5 M421.4 340.5 L488.0 287.9 M430.0 341.3 L489.1 295.0 M438.4 343.6 L489.4 302.5 M447.7 342.2 L485.2 313.7 M463.0 339.0 L477.2 326.8" fill="none" stroke="#F5E38D" stroke-width="1.3" stroke-linecap="round" opacity="0.9"/><path d="M423.6 315.5 L433.4 328.9 M412.2 307.0 L436.3 343.2 M403.8 302.8 L436.8 352.2 M397.3 300.0 L435.3 360.3 M391.4 300.5 L434.2 365.5 M384.3 298.2 L432.7 372.1 M379.7 299.3 L428.7 375.0 M374.2 300.0 L427.6 380.9 M369.6 302.0 L422.8 382.7 M366.3 304.2 L419.1 387.0 M362.1 305.7 L415.7 390.0 M357.9 308.9 L412.7 394.1 M353.7 310.3 L408.1 395.7 M350.2 313.5 L403.5 396.9 M347.4 318.0 L399.3 399.5 M343.7 321.7 L395.1 400.2 M340.5 326.2 L390.2 401.9 M338.6 331.3 L384.1 402.1 M336.1 335.8 L378.3 401.2 M334.6 341.3 L372.2 400.9 M333.8 349.6 L365.4 399.0 M334.1 359.8 L357.5 394.2" fill="none" stroke="#A9A1D3" stroke-width="2.0" stroke-linecap="round" opacity="1"/><path d="M450.5 330.8 L461.4 314.5 M447.6 343.2 L473.1 305.0 M447.8 353.4 L481.1 301.9 M449.7 359.2 L487.2 300.2 M450.5 365.4 L493.3 300.4 M453.0 370.8 L500.2 298.4 M455.1 376.5 L505.6 298.6 M458.1 379.5 L509.7 301.6 M460.6 383.9 L514.4 302.6 M465.1 386.6 L519.2 302.2 M469.0 389.6 L523.3 305.3 M471.8 393.0 L527.5 307.6 M475.9 395.2 L531.0 311.9 M481.2 397.0 L533.8 314.8 M485.6 398.4 L537.7 318.5 M490.1 400.0 L541.8 320.7 M494.3 401.5 L545.2 324.9 M499.8 402.5 L545.6 330.8 M506.3 401.9 L547.9 336.3 M512.8 399.9 L550.7 341.0 M519.5 396.7 L550.6 350.7 M527.8 394.4 L550.7 357.4" fill="none" stroke="#E3938F" stroke-width="2.0" stroke-linecap="round" opacity="1"/><circle cx="440.0" cy="294.0" r="56.6" fill="none" stroke="#E9EFED" stroke-width="1.7"/><circle cx="385.2" cy="350.3" r="56.6" fill="none" stroke="#E9EFED" stroke-width="1.7"/><circle cx="499.3" cy="350.3" r="56.6" fill="none" stroke="#E9EFED" stroke-width="1.7"/><path d="M440 214.5 V237 M301 350.2 H329 M556 350.2 H583" stroke="#E9EFED" stroke-width="1.8"/></svg><span class="t" style="left:327.6px;top:71.9px;font-size:31.4px;color:#E9EFED;transform:scaleX(0.3970);">HOW</span><span class="t" style="left:364.5px;top:71.3px;font-size:32.1px;color:#E9EFED;transform:scaleX(0.4126);">ABOUT</span><span class="t" style="left:415.0px;top:71.4px;font-size:31.4px;color:#E9EFED;transform:scaleX(0.4247);">THE</span><span class="t" style="left:446.3px;top:71.3px;font-size:32.1px;color:#B3D39E;transform:scaleX(0.4117);">PERCENTAGES</span><span class="t" style="left:545.2px;top:78.3px;font-size:20.3px;color:#E9EFED;transform:scaleX(0.4946);">?</span><span class="t" style="left:431.0px;top:123.6px;font-size:18.2px;color:#E9EFED;transform:scaleX(0.5307);">55%</span><span class="t" style="left:414.1px;top:141.0px;font-size:23.0px;color:#E9EFED;transform:scaleX(0.4583);">MERCURY</span><span class="t" style="left:260.1px;top:306.6px;font-size:18.2px;color:#E9EFED;transform:scaleX(0.4623);">15%</span><span class="t" style="left:242.0px;top:324.7px;font-size:22.8px;color:#E9EFED;transform:scaleX(0.4522);">VENUS</span><span class="t" style="left:602.9px;top:306.6px;font-size:18.2px;color:#E9EFED;transform:scaleX(0.5615);">30%</span><span class="t" style="left:603.0px;top:324.7px;font-size:22.8px;color:#E9EFED;transform:scaleX(0.4421);">NEPTUNE</span><span class="t" style="left:367.7px;top:171.5px;font-size:11.7px;color:#E6ECEA;transform:scaleX(0.9035);">Mercury is the closest planet to</span><span class="t" style="left:423.2px;top:186.5px;font-size:11.7px;color:#E6ECEA;transform:scaleX(0.8783);">the Sun</span><span class="t" style="left:129.0px;top:354.4px;font-size:11.7px;color:#E6ECEA;transform:scaleX(0.8860);">Venus has a beautiful name, but</span><span class="t" style="left:210.0px;top:369.5px;font-size:11.7px;color:#E6ECEA;transform:scaleX(0.9326);">it’s terribly hot</span><span class="t" style="left:603.6px;top:354.4px;font-size:11.7px;color:#E6ECEA;transform:scaleX(0.9157);">Neptune is the farthest planet</span><span class="t" style="left:604.3px;top:369.5px;font-size:11.7px;color:#E6ECEA;transform:scaleX(0.9083);">from the Sun</span></div>
<div class="r" style="left:206px;top:680px;width:1094px;height:1.2px;background:#B9B9B9;"></div>
<span class="t" style="left:216.2px;top:689.2px;font-size:14.6px;color:#5E5E5E;transform:scaleX(1.0150);">Click to add notes</span>
<div class="r" style="left:1288px;top:160px;width:12px;height:554px;background:#DBDBDB;"></div>
<div class="r" style="left:1288px;top:160.5px;width:13px;height:14px;background:#FDFDFD;border:1px solid #C6C6C6;box-sizing:border-box"></div>
<div class="r" style="left:1288px;top:331.5px;width:13px;height:15.5px;background:#FDFDFD;border:1px solid #C6C6C6;box-sizing:border-box"></div>
<div class="r" style="left:1288px;top:609.5px;width:13px;height:14px;background:#FDFDFD;border:1px solid #C6C6C6;box-sizing:border-box"></div>
<div class="r" style="left:1288px;top:624px;width:12px;height:56px;background:#E6E6E6;"></div>
<div class="r" style="left:1288px;top:680px;width:12px;height:1.2px;background:#B9B9B9;"></div>
<div class="r" style="left:1288px;top:681.2px;width:12px;height:33px;background:#E6E6E6;"></div>
<div class="r" style="left:32px;top:109px;width:134px;height:77px;background:#F6F6F6;border:1px solid #CBCBCB;box-sizing:border-box"></div>
<svg class="r" style="left:34px;top:111px;background:#113A40;" width="130" height="73" viewBox="0 0 130 73"><path d="M42 40 H92 L97 52 H36 Z" fill="#5E8285" opacity="0.75"/><rect x="36.5" y="53" width="1" height="1.2" fill="#DDE6E3" opacity="0.7"/><rect x="50.3" y="53" width="1" height="1.2" fill="#DDE6E3" opacity="0.7"/><rect x="63.7" y="53" width="1" height="1.2" fill="#DDE6E3" opacity="0.7"/><rect x="77" y="53" width="1" height="1.2" fill="#DDE6E3" opacity="0.7"/><rect x="90.3" y="53" width="1" height="1.2" fill="#DDE6E3" opacity="0.7"/><path d="M46.0 58.45 H84.4" stroke="#DDE6E3" stroke-width="0.9" stroke-dasharray="1.8 0.7 2.1 0.7 2.7 0.5" opacity="0.87" fill="none"/><path d="M51.0 60.65 H79.0" stroke="#DDE6E3" stroke-width="0.9" stroke-dasharray="1.2 0.8 1.8 0.6 3.6 0.7" opacity="0.87" fill="none"/></svg>
<div class="r" style="left:32px;top:204px;width:134px;height:77px;background:#F6F6F6;border:1px solid #CBCBCB;box-sizing:border-box"></div>
<svg class="r" style="left:34px;top:206px;background:#113A40;" width="130" height="73" viewBox="0 0 130 73"><path d="M35.8 12.60 H65.3" stroke="#F2F2F2" stroke-width="1.4" stroke-dasharray="1.6 0.3 1.4 0.3 1.4 0.4" opacity="0.92" fill="none"/><path d="M65.6 12.60 H94.0" stroke="#E38B72" stroke-width="1.4" stroke-dasharray="1.3 0.4 1.5 0.3 1.6 0.4" opacity="0.92" fill="none"/><rect x="40.3" y="25.9" width="6.2" height="5" rx="1.6" fill="none" stroke="#DDE6E3" stroke-width="0.6" opacity="0.75"/><rect x="42.199999999999996" y="27.5" width="2.4" height="1.6" fill="#EEF2F0" opacity="0.9"/><rect x="84.2" y="25.9" width="6.2" height="5" rx="1.6" fill="none" stroke="#DDE6E3" stroke-width="0.6" opacity="0.75"/><rect x="86.1" y="27.5" width="2.4" height="1.6" fill="#EEF2F0" opacity="0.9"/><rect x="40.3" y="49.3" width="6.2" height="5" rx="1.6" fill="none" stroke="#DDE6E3" stroke-width="0.6" opacity="0.75"/><rect x="42.199999999999996" y="50.9" width="2.4" height="1.6" fill="#EEF2F0" opacity="0.9"/><rect x="84.2" y="49.3" width="6.2" height="5" rx="1.6" fill="none" stroke="#DDE6E3" stroke-width="0.6" opacity="0.75"/><rect x="86.1" y="50.9" width="2.4" height="1.6" fill="#EEF2F0" opacity="0.9"/><path d="M15.0 25.20 H37.0" stroke="#E6ECEA" stroke-width="1.0" stroke-dasharray="1.9 0.5 3.3 0.7 2.9 0.9" opacity="0.82" fill="none"/><path d="M20.8 28.30 H37.0" stroke="#E6ECEA" stroke-width="1.0" stroke-dasharray="2.9 0.9 2.1 0.8 2.3 0.9" opacity="0.82" fill="none"/><path d="M20.8 30.40 H37.0" stroke="#E6ECEA" stroke-width="1.0" stroke-dasharray="3.3 0.5 1.5 0.6 3.5 0.7" opacity="0.82" fill="none"/><path d="M94.0 25.20 H115.0" stroke="#E6ECEA" stroke-width="1.0" stroke-dasharray="2.7 0.6 2.4 0.7 2.0 0.7" opacity="0.82" fill="none"/><path d="M94.0 28.30 H109.8" stroke="#E6ECEA" stroke-width="1.0" stroke-dasharray="2.6 0.9 2.8 0.9 3.3 0.9" opacity="0.82" fill="none"/><path d="M94.0 30.40 H109.8" stroke="#E6ECEA" stroke-width="1.0" stroke-dasharray="2.8 0.6 3.3 0.9 3.4 0.7" opacity="0.82" fill="none"/><path d="M14.0 49.20 H37.0" stroke="#E6ECEA" stroke-width="1.0" stroke-dasharray="2.9 0.6 3.2 0.7 1.9 0.5" opacity="0.82" fill="none"/><path d="M15.6 51.80 H37.0" stroke="#E6ECEA" stroke-width="1.0" stroke-dasharray="3.2 0.9 1.4 0.8 2.2 0.6" opacity="0.82" fill="none"/><path d="M22.0 54.10 H37.0" stroke="#E6ECEA" stroke-width="1.0" stroke-dasharray="1.9 0.8 3.3 0.5 2.7 0.5" opacity="0.82" fill="none"/><path d="M94.0 49.20 H115.0" stroke="#E6ECEA" stroke-width="1.0" stroke-dasharray="2.9 0.6 3.3 0.9 2.4 0.9" opacity="0.82" fill="none"/><path d="M94.0 51.80 H113.0" stroke="#E6ECEA" stroke-width="1.0" stroke-dasharray="1.9 0.5 2.6 0.5 1.7 0.7" opacity="0.82" fill="none"/><path d="M94.0 54.10 H113.0" stroke="#E6ECEA" stroke-width="1.0" stroke-dasharray="2.7 0.6 1.3 0.8 2.0 0.9" opacity="0.82" fill="none"/><path d="M55.5 34.5 L47.5 29.3 M77.5 34.5 L85 29.3 M55.5 44 L47.5 49 M77.5 46 L84 50" stroke="#DDE6E3" stroke-width="0.6" opacity="0.7" fill="none"/><path d="M47.3 31 V29.2 H49.2 M83.2 29.2 H85.1 V31 M47.3 47.3 V49.1 H49.2 M82.2 50 H84.1 V48.2" stroke="#DDE6E3" stroke-width="0.6" opacity="0.7" fill="none"/><path d="M66.5 30 V32.8 M60 32.6 L61.6 34.8 M71.6 31.6 L70.6 34.2 M56 38.5 H58.2 M75 37.8 H77.2 M54.8 42.5 H57.4 M76 42.5 H78.4" stroke="#DDE6E3" stroke-width="0.6" opacity="0.75"/><path d="M64.7 56.4 C63 50.5 57.6 47 57.7 40.6 C57.8 35.4 61.5 32.6 66.5 32.6 C71.5 32.6 75.3 35.4 75.4 40.6 C75.5 47 70.2 50.5 70.5 56.4" fill="none" stroke="#E8EEEC" stroke-width="0.7" opacity="0.9"/><path d="M65.3 45 V56 M69.4 45 V56" stroke="#E8EEEC" stroke-width="0.55" opacity="0.8"/><ellipse cx="66.5" cy="40.3" rx="6.4" ry="4.4" fill="#8C9859"/><ellipse cx="66" cy="40" rx="4.4" ry="2.8" fill="#A3AC6B" opacity="0.7"/><rect x="64.9" y="56.6" width="5.4" height="5" fill="#DDE6E3" opacity="0.8"/><path d="M68 61.6 C68 65 70.2 67.5 67.4 73" fill="none" stroke="#E8EEEC" stroke-width="0.7" opacity="0.9"/></svg>
<div class="r" style="left:32px;top:299px;width:134px;height:77px;background:#F6F6F6;border:1px solid #CBCBCB;box-sizing:border-box"></div>
<svg class="r" style="left:34px;top:301px;background:#113A40;" width="130" height="73" viewBox="0 0 130 73"><path d="M46.0 12.55 H77.0" stroke="#F2F2F2" stroke-width="1.7" stroke-dasharray="1.7 0.3 1.3 0.4 1.4 0.4" opacity="0.95" fill="none"/><path d="M77.3 12.55 H84.0" stroke="#C9C6EE" stroke-width="1.7" stroke-dasharray="1.4 0.4 1.7 0.4 1.2 0.4" opacity="0.95" fill="none"/><path d="M23.6 19.40 H28.0" stroke="#EEF2F0" stroke-width="2.4" stroke-dasharray="1.0 0.3 1.8 0.4 1.3 0.3" opacity="0.9" fill="none"/><path d="M36.7 19.40 H41.1" stroke="#EEF2F0" stroke-width="2.4" stroke-dasharray="1.2 0.4 0.8 0.4 1.4 0.3" opacity="0.9" fill="none"/><path d="M49.6 19.40 H54.0" stroke="#EEF2F0" stroke-width="2.4" stroke-dasharray="1.4 0.3 1.5 0.3 1.5 0.4" opacity="0.9" fill="none"/><path d="M62.7 19.40 H67.1" stroke="#EEF2F0" stroke-width="2.4" stroke-dasharray="0.8 0.3 1.5 0.4 1.1 0.3" opacity="0.9" fill="none"/><path d="M75.6 19.40 H80.0" stroke="#EEF2F0" stroke-width="2.4" stroke-dasharray="1.4 0.3 1.2 0.3 1.2 0.4" opacity="0.9" fill="none"/><path d="M88.6 19.40 H93.0" stroke="#EEF2F0" stroke-width="2.4" stroke-dasharray="1.1 0.3 1.6 0.3 1.4 0.4" opacity="0.9" fill="none"/><path d="M101.6 19.40 H106.0" stroke="#EEF2F0" stroke-width="2.4" stroke-dasharray="1.1 0.3 1.6 0.3 1.0 0.3" opacity="0.9" fill="none"/><path d="M19 23.2 H110.5" stroke="#86A7A0" stroke-width="0.5" stroke-dasharray="2.2 0.6" opacity="0.45"/><path d="M19 34.4 H110.5" stroke="#86A7A0" stroke-width="0.5" stroke-dasharray="2.2 0.6" opacity="0.45"/><path d="M19 44.4 H110.5" stroke="#86A7A0" stroke-width="0.5" stroke-dasharray="2.2 0.6" opacity="0.45"/><path d="M19 55.2 H110.5" stroke="#86A7A0" stroke-width="0.5" stroke-dasharray="2.2 0.6" opacity="0.45"/><path d="M19 65.3 H110.5" stroke="#86A7A0" stroke-width="0.5" stroke-dasharray="2.2 0.6" opacity="0.45"/><path d="M32.2 17 V65.3" stroke="#86A7A0" stroke-width="0.5" stroke-dasharray="2.2 0.6" opacity="0.4"/><path d="M45.2 17 V65.3" stroke="#86A7A0" stroke-width="0.5" stroke-dasharray="2.2 0.6" opacity="0.4"/><path d="M58.2 17 V65.3" stroke="#86A7A0" stroke-width="0.5" stroke-dasharray="2.2 0.6" opacity="0.4"/><path d="M71.2 17 V65.3" stroke="#86A7A0" stroke-width="0.5" stroke-dasharray="2.2 0.6" opacity="0.4"/><path d="M84.3 17 V65.3" stroke="#86A7A0" stroke-width="0.5" stroke-dasharray="2.2 0.6" opacity="0.4"/><path d="M97.3 17 V65.3" stroke="#86A7A0" stroke-width="0.5" stroke-dasharray="2.2 0.6" opacity="0.4"/><rect x="20" y="25" width="2" height="0.9" fill="#EFD36A"/><rect x="33" y="25" width="2" height="0.9" fill="#EFD36A"/><rect x="47" y="25" width="2" height="0.9" fill="#EFD36A"/><rect x="60" y="25" width="0.8" height="0.9" fill="#EFD36A"/><rect x="72" y="25" width="2" height="0.9" fill="#EFD36A"/><rect x="85" y="25" width="2" height="0.9" fill="#E58C8C"/><rect x="98" y="25" width="2" height="0.9" fill="#E58C8C"/><rect x="20" y="35" width="2" height="2" fill="#CDC4EE"/><rect x="33" y="35" width="2" height="2" fill="#CDC4EE"/><rect x="47" y="35" width="2" height="2" fill="#CDC4EE"/><rect x="60" y="35" width="0.8" height="2" fill="#CDC4EE"/><rect x="72" y="35" width="2" height="2" fill="#CDC4EE"/><rect x="85" y="35" width="2" height="2" fill="#E58C8C"/><rect x="98" y="35" width="2" height="2" fill="#E58C8C"/><rect x="20" y="45.2" width="2" height="2" fill="#F5C58A"/><rect x="33" y="45.2" width="2" height="2" fill="#F5C58A"/><rect x="47" y="45.2" width="2" height="2" fill="#F5C58A"/><rect x="60" y="45.2" width="0.8" height="2" fill="#F5C58A"/><rect x="72" y="45.2" width="2" height="2" fill="#F5C58A"/><rect x="85" y="45.2" width="2" height="2" fill="#E58C8C"/><rect x="98" y="45.2" width="2" height="2" fill="#E58C8C"/><rect x="20" y="56" width="2" height="2" fill="#F5C58A"/><rect x="33" y="56" width="2" height="2" fill="#F5C58A"/><rect x="47" y="56" width="2" height="2" fill="#F5C58A"/><rect x="60" y="56" width="0.8" height="2" fill="#F5C58A"/><rect x="72" y="56" width="2" height="2" fill="#F5C58A"/><rect x="85" y="56" width="2" height="2" fill="#E58C8C"/><rect x="98" y="56" width="2" height="2" fill="#E58C8C"/></svg>
<div class="r" style="left:32px;top:394px;width:134px;height:77px;background:#F6F6F6;border:1px solid #CBCBCB;box-sizing:border-box"></div>
<svg class="r" style="left:34px;top:396px;background:#113A40;" width="130" height="73" viewBox="0 0 130 73"><path d="M57.0 12.55 H68.2" stroke="#F2F2F2" stroke-width="1.7" stroke-dasharray="1.5 0.3 1.1 0.3 1.6 0.3" opacity="0.95" fill="none"/><path d="M68.4 12.55 H72.8" stroke="#E38B72" stroke-width="1.7" stroke-dasharray="1.7 0.3 1.1 0.4 1.7 0.3" opacity="0.95" fill="none"/><path d="M22.1 36.5h0.9M29.0 36.2h0.9M16.0 29.5h0.7M31.2 31.1h0.7M24.1 27.4h0.7M34.1 27.0h0.9M20.5 30.8h0.7M22.5 27.7h0.9M22.3 33.1h0.9M27.6 27.7h0.5M18.5 30.9h0.7M26.5 33.5h0.7M20.2 31.3h0.9M26.0 29.0h0.9M23.7 30.5h0.5M28.6 26.9h0.9M31.5 32.3h0.9M27.6 38.0h0.5M20.9 33.7h0.7M32.1 32.5h0.5M28.9 30.8h0.7M31.3 27.8h0.7M31.6 30.5h0.7M18.9 27.6h0.7M25.1 28.6h0.9M19.2 29.5h0.7M32.5 32.4h0.5M23.0 30.1h0.5M30.5 29.5h0.7M23.4 35.1h0.7M30.9 29.7h0.7M31.5 31.0h0.5M32.9 33.1h0.7M24.7 30.2h0.5M19.2 27.2h0.7M25.5 35.2h0.9M32.8 28.2h0.5M31.0 28.5h0.9M20.2 34.6h0.7M23.9 38.1h0.7M31.6 33.1h0.9M19.3 29.8h0.7M27.1 36.8h0.7M24.1 37.0h0.5M24.0 32.5h0.7M27.4 29.3h0.5M33.2 31.4h0.9M21.5 34.7h0.5M34.4 28.2h0.5M23.7 28.7h0.9M22.1 35.3h0.7M17.7 28.5h0.7M24.7 30.8h0.9M26.6 30.9h0.7M19.4 28.8h0.5M21.4 31.0h0.5M23.8 32.1h0.7M26.6 37.7h0.5M28.3 28.7h0.7M34.6 30.9h0.7M22.8 28.9h0.7M23.9 30.8h0.9M31.3 27.8h0.9M31.9 31.5h0.9M34.0 29.2h0.5M22.7 29.9h0.7M25.5 31.2h0.7M35.4 30.2h0.9M32.5 30.2h0.9M22.6 35.5h0.9M30.3 33.0h0.9M33.5 30.3h0.9M31.8 26.9h0.5M26.0 28.4h0.7M26.9 27.1h0.7M26.2 29.5h0.7M24.8 31.7h0.9M33.0 28.2h0.5M28.1 31.0h0.9M22.1 36.4h0.7M27.7 32.0h0.7M18.8 30.3h0.7M27.9 31.1h0.5M26.4 32.0h0.7M34.9 29.9h0.9M21.2 27.0h0.7M22.9 27.4h0.5M20.7 28.4h0.9M24.8 27.5h0.9M19.0 31.0h0.5M26.7 34.2h0.5M20.8 33.8h0.5M32.8 32.2h0.5M30.0 31.1h0.7M24.5 35.0h0.9M18.9 28.5h0.7M17.8 28.8h0.7M16.9 29.1h0.5M21.8 36.9h0.9M26.5 30.6h0.9M26.5 33.5h0.7M28.2 32.2h0.5M14.3 30.2h0.9M25.3 39.0h0.7M21.4 33.1h0.9M24.9 29.7h0.5M21.1 35.4h0.7M23.0 35.6h0.5M22.1 36.7h0.7M25.6 37.0h0.7M22.4 29.7h0.5M27.4 37.5h0.9M28.0 30.4h0.7M26.5 32.6h0.5M22.8 28.4h0.7M20.0 30.8h0.9M23.7 30.5h0.7M24.0 39.4h0.9M19.7 33.0h0.7M24.0 33.7h0.5M28.6 33.5h0.9M25.1 29.7h0.7M20.8 28.8h0.9M23.6 39.0h0.7M33.7 27.6h0.5M31.7 33.7h0.9M25.5 34.4h0.5M24.5 39.4h0.9M30.8 30.7h0.7M26.7 34.9h0.7M28.9 36.2h0.5M19.9 29.6h0.5M23.5 29.2h0.7M30.8 27.1h0.9M27.8 29.5h0.7M25.6 29.5h0.5M16.5 31.4h0.9M25.6 35.5h0.9M22.9 27.7h0.9M18.9 30.3h0.5M27.5 31.2h0.5M20.4 34.6h0.7M28.6 29.2h0.5M30.6 31.3h0.7M19.5 29.6h0.5M31.2 28.9h0.7M30.7 32.4h0.9M22.4 34.3h0.7M25.3 33.9h0.7M18.1 31.6h0.9M24.9 35.8h0.7M25.1 31.9h0.9M31.0 32.6h0.7M17.5 32.5h0.9M29.8 30.1h0.5M34.9 31.3h0.9M28.1 49.0h0.5M24.1 43.7h0.9M30.1 46.3h0.5M25.1 44.3h0.5M29.0 52.9h0.7M28.4 44.2h0.9M29.0 55.8h0.9M31.8 47.9h0.9M28.0 49.0h0.9M31.6 51.5h0.9M25.6 47.3h0.7M28.4 55.3h0.5M23.0 45.7h0.9M30.4 49.8h0.7M27.3 52.8h0.9M28.4 46.9h0.7M26.0 51.8h0.7M28.2 43.3h0.9M26.9 47.3h0.5M24.4 40.9h0.9M25.2 52.3h0.9M24.3 44.7h0.9M28.4 48.2h0.5M24.5 46.0h0.5M23.1 44.5h0.9M31.8 52.1h0.9M29.3 51.4h0.7M24.6 41.8h0.9M29.2 50.2h0.5M26.3 56.1h0.5M26.7 54.7h0.9M25.1 49.8h0.9M30.8 45.4h0.5M31.0 53.7h0.5M27.5 56.6h0.7M25.5 46.8h0.7M28.1 44.9h0.9M24.0 48.9h0.9M28.9 51.1h0.5M30.2 48.5h0.9M25.5 51.6h0.9M23.6 46.1h0.9M30.2 47.3h0.9M29.1 45.2h0.7M25.5 51.9h0.5M28.1 50.1h0.7M24.3 48.9h0.5M26.8 56.5h0.9M29.4 53.8h0.7M28.4 50.7h0.5M26.2 47.2h0.7M25.2 51.4h0.5M27.6 45.5h0.7M27.0 48.6h0.9M24.9 42.2h0.7M25.5 45.8h0.5M29.8 54.3h0.9M28.8 53.8h0.5M28.3 45.2h0.9M29.5 54.7h0.7M25.4 50.7h0.7M24.5 42.8h0.9M29.1 53.9h0.7M26.0 42.0h0.7M29.4 56.0h0.9M26.3 43.5h0.9M24.2 40.7h0.5M23.0 41.6h0.5M30.5 49.0h0.7M30.4 48.1h0.7M27.7 49.6h0.7M29.4 46.7h0.9M30.9 49.2h0.9M26.4 47.8h0.7M27.3 57.2h0.9M26.7 43.0h0.7M32.7 50.5h0.7M28.0 54.9h0.5M27.5 46.1h0.9M26.4 54.7h0.7M23.2 41.4h0.7M26.3 44.7h0.7M28.0 48.2h0.7M25.0 46.9h0.5M30.8 47.7h0.5M22.9 43.5h0.9M30.0 53.3h0.9M29.8 50.9h0.9M28.1 56.1h0.9M26.1 43.3h0.5M25.6 46.9h0.7M30.6 52.3h0.5M26.3 46.0h0.7M26.7 49.7h0.9M24.8 51.0h0.7M24.3 43.4h0.7M46.5 33.0h0.5M42.3 31.0h0.9M40.0 33.4h0.9M42.8 29.0h0.5M41.3 30.1h0.7M38.7 32.0h0.9M42.2 34.1h0.5M44.0 34.4h0.5M41.3 33.4h0.5M42.2 34.0h0.7M39.5 33.2h0.9M47.7 33.6h0.5M46.2 28.8h0.9M41.3 32.7h0.7M47.5 28.5h0.5M48.4 32.5h0.7M45.4 28.0h0.7M45.6 29.4h0.9M49.5 32.0h0.7M48.5 33.6h0.9M46.3 33.6h0.7M43.5 31.9h0.7M45.5 32.5h0.7M38.8 32.7h0.7M45.4 33.2h0.5M42.2 29.1h0.9M46.4 30.0h0.5M44.3 32.0h0.5M45.1 29.3h0.5M38.8 32.7h0.5M39.8 32.1h0.9M43.2 32.3h0.5M48.9 32.6h0.9M43.9 31.4h0.5M42.1 30.0h0.5M43.8 31.8h0.7M39.8 28.6h0.9M44.2 29.4h0.9M48.2 27.8h0.9M42.1 30.7h0.9M40.0 29.4h0.5M44.1 31.5h0.5M43.6 27.5h0.9M46.9 33.8h0.9M42.3 30.4h0.5M46.8 27.9h0.9M45.0 29.0h0.9M45.5 32.6h0.9M44.2 27.6h0.9M42.8 30.6h0.9M48.8 31.9h0.9M46.9 31.2h0.5M43.1 33.5h0.5M39.7 33.1h0.5M41.8 29.6h0.9M45.3 27.2h0.9M41.2 28.2h0.9M46.8 33.0h0.9M41.3 30.3h0.7M42.1 32.2h0.7M45.0 34.1h0.7M50.1 28.4h0.5M40.3 32.6h0.7M41.5 32.6h0.9M42.8 30.7h0.5M41.8 31.2h0.7M41.8 29.2h0.5M47.2 33.5h0.9M39.1 30.7h0.7M41.9 31.3h0.7M39.5 29.4h0.7M48.0 31.5h0.9M47.1 50.3h0.9M43.7 38.5h0.5M47.4 43.8h0.7M44.5 42.6h0.5M44.3 38.8h0.7M42.0 41.6h0.7M41.1 44.7h0.7M36.5 41.6h0.5M48.6 43.3h0.9M46.1 41.9h0.9M40.0 40.7h0.9M37.7 42.2h0.5M41.5 38.1h0.5M47.2 48.5h0.5M46.6 46.0h0.5M41.7 40.5h0.5M50.0 45.7h0.9M47.7 46.6h0.7M48.9 40.1h0.7M42.0 44.5h0.9M44.8 50.0h0.5M39.7 39.0h0.7M48.0 38.9h0.9M42.0 49.7h0.7M45.8 44.5h0.7M44.4 47.0h0.5M44.2 48.8h0.7M42.2 48.8h0.7M40.0 39.4h0.5M48.9 44.0h0.5M41.4 44.9h0.5M46.5 47.9h0.7M44.4 42.4h0.5M41.8 47.4h0.9M40.5 40.4h0.5M44.2 37.9h0.9M49.5 45.7h0.9M50.6 45.2h0.9M43.4 50.4h0.9M43.4 46.8h0.9M39.8 41.1h0.9M40.8 38.5h0.9M47.6 40.6h0.7M50.1 43.8h0.9M40.4 45.1h0.5M46.0 50.8h0.7M45.8 42.0h0.9M47.1 38.7h0.5M41.3 45.2h0.7M45.2 53.3h0.7M50.7 43.9h0.5M43.3 50.0h0.7M47.1 44.3h0.7M46.4 44.7h0.9M38.8 40.7h0.9M40.7 43.2h0.7M48.7 39.4h0.7M44.3 50.9h0.7M46.8 49.4h0.9M42.2 50.2h0.9M38.8 39.2h0.9M46.3 44.2h0.9M42.4 40.1h0.9M39.7 42.8h0.5M44.4 38.1h0.7M40.9 41.4h0.7M46.8 48.6h0.5M48.9 46.9h0.5M46.0 50.7h0.5M42.5 52.0h0.5M46.0 38.4h0.7M38.4 43.5h0.5M48.0 47.5h0.9M45.2 40.5h0.9M44.1 50.0h0.7M42.3 47.7h0.9M49.1 44.5h0.9M46.9 47.3h0.9M49.2 39.8h0.7M40.7 39.4h0.5M42.3 37.7h0.5M47.4 47.4h0.9M43.1 45.9h0.9M44.7 48.2h0.5M50.2 41.8h0.5M43.6 41.6h0.9M47.0 48.5h0.5M43.1 41.3h0.9M37.4 42.9h0.7M44.8 40.0h0.5M43.1 52.9h0.5M45.3 51.5h0.7M38.7 41.0h0.7M47.0 38.8h0.7M45.2 39.5h0.7M47.9 47.7h0.5M43.6 40.3h0.7M37.1 39.2h0.5M37.6 40.7h0.5M39.1 41.4h0.5M46.7 44.8h0.5M47.5 46.3h0.5M41.2 45.9h0.9M44.7 47.0h0.7M43.2 42.6h0.7M46.1 42.3h0.7M43.4 41.9h0.9M39.5 39.9h0.7M47.8 46.1h0.9M40.1 37.7h0.7M42.9 43.7h0.9M42.7 51.7h0.7M41.0 37.6h0.7M47.6 38.2h0.5M42.9 38.9h0.7M46.7 45.0h0.7M49.6 41.9h0.7M46.5 50.1h0.9M45.4 40.5h0.5M38.1 39.4h0.7M45.8 46.7h0.7M47.4 41.8h0.7M47.1 50.0h0.5M47.9 40.0h0.7M44.4 39.4h0.7M39.2 40.0h0.9M47.1 49.6h0.7M45.6 50.9h0.7M45.9 49.3h0.7M43.2 44.4h0.9M40.6 40.5h0.5M48.7 43.3h0.7M48.7 38.9h0.9M42.9 44.8h0.7M47.5 41.9h0.9M64.5 38.0h0.5M63.7 31.9h0.9M64.6 30.4h0.7M56.6 41.6h0.7M55.4 40.3h0.7M63.7 32.5h0.7M60.8 33.7h0.7M53.8 37.7h0.5M57.2 31.0h0.5M70.8 29.3h0.5M62.7 43.9h0.5M55.9 36.2h0.9M62.3 40.9h0.7M63.1 29.7h0.9M55.8 32.4h0.5M59.3 28.0h0.9M64.5 40.7h0.9M60.7 35.5h0.7M59.0 38.4h0.9M66.8 33.5h0.7M70.0 32.1h0.5M64.1 37.1h0.7M67.5 29.1h0.9M60.6 34.4h0.9M55.9 35.1h0.9M61.3 26.4h0.7M61.5 27.1h0.7M63.8 36.0h0.7M64.0 29.2h0.5M57.4 29.9h0.7M65.9 38.0h0.7M64.6 33.0h0.5M67.6 32.3h0.9M57.6 35.5h0.5M69.3 31.2h0.5M51.3 34.4h0.9M68.6 32.7h0.7M66.5 28.8h0.5M63.1 35.9h0.7M54.2 36.5h0.7M63.9 31.8h0.9M65.9 36.4h0.9M65.6 32.0h0.9M64.3 35.1h0.7M60.7 37.8h0.5M63.2 28.3h0.9M58.6 29.9h0.9M62.1 44.8h0.5M64.7 41.5h0.9M54.6 33.1h0.9M61.1 29.9h0.7M61.6 41.4h0.7M53.4 34.2h0.5M63.3 39.9h0.9M56.3 41.5h0.5M63.7 34.7h0.9M60.0 28.1h0.9M60.2 39.2h0.7M59.6 28.9h0.5M60.7 39.2h0.5M62.2 40.8h0.9M63.8 43.2h0.9M62.3 41.6h0.9M60.6 39.3h0.7M58.0 35.4h0.9M56.4 28.9h0.7M67.2 30.0h0.9M58.4 34.3h0.5M65.7 33.9h0.7M62.1 40.5h0.7M62.6 38.8h0.7M62.4 40.6h0.9M59.8 39.4h0.5M62.4 40.6h0.7M55.7 38.1h0.5M53.2 35.3h0.7M62.9 27.0h0.9M57.6 30.7h0.7M56.6 30.1h0.9M63.7 26.9h0.7M70.4 29.7h0.9M69.0 32.3h0.9M56.3 29.5h0.7M65.8 37.0h0.7M58.4 36.7h0.7M66.1 30.1h0.5M56.0 32.4h0.5M65.7 29.4h0.5M53.4 30.1h0.7M61.4 41.5h0.9M58.9 28.5h0.5M58.0 38.4h0.7M63.9 31.4h0.5M58.1 27.5h0.5M59.7 34.5h0.5M57.7 41.3h0.5M63.9 38.6h0.7M55.3 39.2h0.5M65.9 37.2h0.7M55.8 35.7h0.7M52.9 37.6h0.5M57.8 31.0h0.5M58.6 39.5h0.9M61.1 30.6h0.5M58.4 40.7h0.5M57.1 40.5h0.7M67.4 29.5h0.5M62.3 30.4h0.5M69.6 31.1h0.7M67.5 34.5h0.5M66.9 33.3h0.9M68.3 30.1h0.5M70.4 27.6h0.9M52.4 32.0h0.5M60.7 34.1h0.7M58.0 30.7h0.7M58.7 34.3h0.9M64.6 35.7h0.9M55.0 32.7h0.9M63.1 40.9h0.7M55.5 40.0h0.5M62.7 42.6h0.9M62.1 37.3h0.9M58.5 36.5h0.9M65.8 39.0h0.5M57.1 28.7h0.7M52.5 29.8h0.5M55.1 30.1h0.9M65.4 39.3h0.5M59.9 39.9h0.5M67.0 31.1h0.9M51.8 32.0h0.5M61.9 28.4h0.9M54.1 38.6h0.5M67.6 34.5h0.9M51.5 33.7h0.7M66.7 35.1h0.9M53.9 33.1h0.9M68.6 30.0h0.9M54.6 28.0h0.9M59.4 28.9h0.9M62.8 30.9h0.7M52.2 33.2h0.9M65.6 36.1h0.9M54.0 32.5h0.9M66.3 37.3h0.5M56.5 27.2h0.7M50.9 30.2h0.7M66.5 31.4h0.5M61.9 34.1h0.9M55.7 42.2h0.9M50.3 28.0h0.7M67.8 33.1h0.9M54.9 29.6h0.9M63.7 34.5h0.9M61.1 34.2h0.9M57.4 31.0h0.9M58.3 32.0h0.7M61.8 43.5h0.7M60.8 35.4h0.9M62.4 27.0h0.5M61.8 39.7h0.7M62.2 44.8h0.5M64.7 27.4h0.7M66.2 36.7h0.9M68.4 30.9h0.9M59.3 40.6h0.5M55.3 38.1h0.5M53.9 28.7h0.5M62.3 35.0h0.5M65.9 39.1h0.9M63.2 38.5h0.7M66.8 34.2h0.9M60.6 31.8h0.7M64.4 41.0h0.9M54.5 27.5h0.5M60.8 36.8h0.5M60.8 36.2h0.9M60.4 36.8h0.5M67.8 28.8h0.7M60.1 35.7h0.9M57.6 29.4h0.5M54.5 35.0h0.9M59.3 34.7h0.9M54.8 30.9h0.9M60.9 41.4h0.9M61.7 34.8h0.5M57.5 41.2h0.9M68.7 30.9h0.5M69.4 27.9h0.7M63.1 42.3h0.9M68.3 31.7h0.5M50.7 30.9h0.5M64.8 41.1h0.5M64.7 36.0h0.5M65.9 33.9h0.5M50.4 30.7h0.5M55.2 29.9h0.7M59.2 39.5h0.5M61.1 32.1h0.5M57.0 27.5h0.7M57.0 27.4h0.9M59.5 33.5h0.9M62.5 35.2h0.9M58.0 40.5h0.7M59.2 37.6h0.5M61.8 44.3h0.5M58.6 26.9h0.5M58.6 29.6h0.5M62.1 38.4h0.5M65.5 29.2h0.5M57.6 39.6h0.7M55.5 34.3h0.7M64.5 40.0h0.7M57.7 31.6h0.7M54.8 40.4h0.5M56.5 37.6h0.7M58.4 33.4h0.9M53.8 30.7h0.9M55.4 34.0h0.5M56.1 35.9h0.9M56.8 27.7h0.7M58.3 40.1h0.7M69.8 29.0h0.9M70.4 48.0h0.7M63.0 52.6h0.5M66.5 53.9h0.5M69.9 50.1h0.5M64.4 50.1h0.5M67.0 48.4h0.7M66.0 51.9h0.7M70.9 50.9h0.5M70.4 50.2h0.9M68.7 47.2h0.5M66.7 47.6h0.5M67.4 53.7h0.7M67.6 48.8h0.9M65.1 47.7h0.7M70.7 51.8h0.7M70.2 49.2h0.7M68.1 52.1h0.7M64.4 51.9h0.5M66.6 52.8h0.5M70.6 50.6h0.5M69.9 51.7h0.9M65.1 52.6h0.7M69.6 50.3h0.5M70.2 47.5h0.5M65.8 50.4h0.5M64.5 48.5h0.5M64.4 51.5h0.5M69.3 47.3h0.9M63.5 48.3h0.7M72.2 50.7h0.9M64.1 50.5h0.9M66.4 47.5h0.5M63.7 49.4h0.5M68.7 48.2h0.9M68.5 49.9h0.9M70.3 49.0h0.9M68.5 52.4h0.5M67.5 50.1h0.9M66.9 54.0h0.5M68.0 53.2h0.7M71.7 50.2h0.9M64.9 50.8h0.5M66.7 50.6h0.9M63.8 50.7h0.5M64.1 48.4h0.5M66.0 51.2h0.7M70.0 47.5h0.7M63.9 51.0h0.7M66.8 47.1h0.7M62.9 52.8h0.5M68.4 46.7h0.9M62.8 53.2h0.7M71.4 49.5h0.5M68.8 47.8h0.9M66.7 54.3h0.7M66.4 53.7h0.9M73.8 55.2h0.5M74.4 54.4h0.9M43.4 27.1h0.9M42.6 25.7h0.5M43.5 27.0h0.5M51.5 21.8h0.5M52.1 24.2h0.5M52.7 22.6h0.5M50.6 23.2h0.9M52.4 23.0h0.9M50.7 23.0h0.7M50.5 22.9h0.5M50.9 23.6h0.5M70.2 23.3h0.7M71.0 23.3h0.5M70.8 23.4h0.7M71.6 23.5h0.7M69.4 24.2h0.7M70.3 23.2h0.7M68.9 25.8h0.5M69.5 24.1h0.7M70.6 24.8h0.9" stroke="#F4F7F6" stroke-width="0.75" opacity="0.85" fill="none"/><path d="M25.2 37.2h0.7M25.7 30.3h0.5M33.3 28.7h0.9M20.9 28.3h0.5M20.4 27.8h0.7M27.9 34.5h0.7M21.9 36.8h0.5M32.3 33.7h0.7M20.6 31.0h0.9M32.0 29.1h0.5M31.6 27.3h0.9M20.5 29.0h0.5M32.2 32.8h0.5M30.7 29.6h0.7M19.3 31.4h0.9M30.5 31.1h0.5M33.3 30.4h0.5M27.4 28.9h0.5M23.1 30.9h0.9M24.8 31.6h0.7M24.6 32.3h0.7M30.3 30.7h0.9M26.6 31.3h0.7M32.6 27.6h0.7M29.5 30.4h0.5M29.4 30.3h0.7M24.3 31.0h0.7M21.7 29.6h0.5M16.6 29.3h0.5M25.5 32.8h0.5M29.9 34.4h0.5M28.8 35.6h0.9M20.7 34.4h0.9M20.8 32.9h0.9M21.6 36.0h0.7M15.7 31.4h0.5M24.5 37.8h0.9M32.4 28.8h0.7M35.3 30.5h0.9M30.4 28.4h0.5M24.2 38.8h0.7M31.6 32.2h0.9M25.0 35.9h0.5M19.0 33.2h0.5M29.8 34.2h0.9M29.1 28.9h0.9M23.6 36.0h0.5M20.3 27.8h0.7M26.7 38.4h0.5M22.4 32.0h0.5M18.2 28.0h0.7M35.0 29.9h0.5M26.5 34.9h0.9M19.1 27.7h0.7M18.8 30.9h0.7M29.3 34.3h0.7M28.1 27.0h0.9M22.6 35.6h0.9M22.4 36.1h0.7M30.3 30.1h0.7M29.6 33.3h0.9M25.8 29.0h0.7M25.5 37.9h0.9M35.9 31.7h0.5M22.5 33.2h0.7M24.2 38.7h0.5M34.1 30.3h0.7M34.7 29.3h0.5M18.3 32.7h0.5M18.4 30.8h0.5M32.4 31.6h0.5M32.9 29.2h0.9M17.9 32.2h0.9M31.0 27.9h0.7M25.7 32.1h0.9M27.9 34.4h0.5M21.6 36.1h0.9M20.0 27.4h0.5M24.2 32.0h0.7M31.5 30.5h0.5M25.8 29.4h0.5M29.0 34.7h0.5M25.9 31.5h0.5M33.6 27.9h0.9M24.0 38.1h0.9M28.0 29.9h0.5M32.4 28.7h0.9M29.6 35.1h0.9M21.6 33.9h0.9M31.4 31.6h0.5M28.6 35.5h0.7M32.4 28.4h0.7M32.7 31.4h0.7M18.3 31.0h0.7M22.0 34.8h0.9M29.4 47.5h0.5M29.4 50.6h0.5M29.4 48.6h0.9M31.6 52.1h0.9M29.7 46.5h0.9M31.5 49.6h0.9M23.0 41.5h0.5M27.3 56.6h0.5M27.1 56.7h0.5M30.4 53.6h0.9M31.4 47.8h0.9M29.9 44.8h0.9M31.2 53.1h0.5M24.9 42.3h0.5M29.8 48.6h0.7M28.8 50.5h0.5M26.1 47.1h0.5M25.7 52.6h0.7M22.9 44.9h0.9M24.9 44.0h0.7M27.8 45.3h0.9M25.6 53.5h0.5M30.3 52.6h0.9M27.3 49.3h0.5M32.6 49.7h0.5M25.9 54.2h0.9M26.5 44.1h0.5M23.7 44.9h0.5M29.6 49.5h0.9M25.7 43.7h0.5M30.3 50.9h0.9M27.7 52.7h0.5M27.9 47.9h0.9M31.7 48.2h0.5M30.0 49.6h0.9M26.0 48.8h0.9M28.3 43.4h0.7M25.8 47.7h0.9M25.4 50.2h0.9M28.8 46.8h0.9M27.7 54.6h0.7M29.3 47.6h0.5M28.7 49.2h0.9M24.8 48.2h0.9M29.6 49.4h0.5M31.6 46.9h0.9M28.7 51.6h0.9M26.5 43.5h0.9M31.3 46.5h0.5M29.7 51.1h0.7M28.3 54.1h0.5M24.9 44.7h0.7M27.4 50.2h0.5M23.3 43.1h0.9M23.5 45.4h0.7M26.6 48.9h0.5M29.9 48.0h0.7M28.2 49.6h0.9M29.8 49.4h0.9M29.6 44.4h0.7M23.1 42.6h0.9M31.1 46.2h0.5M27.7 56.1h0.9M30.4 48.0h0.7M28.4 49.1h0.7M26.1 55.6h0.5M40.2 30.6h0.5M39.6 30.9h0.5M41.8 29.6h0.7M45.1 28.6h0.9M43.8 31.2h0.5M48.8 30.8h0.5M40.6 31.3h0.7M43.7 30.7h0.9M47.8 32.6h0.7M45.4 30.6h0.5M46.7 32.9h0.5M49.7 28.7h0.9M39.7 29.4h0.9M41.0 31.5h0.5M43.4 33.3h0.5M44.7 30.2h0.7M45.3 28.2h0.7M40.5 30.2h0.9M42.6 28.9h0.7M44.1 33.9h0.9M45.1 33.4h0.9M42.4 33.2h0.9M42.9 33.4h0.5M40.6 32.6h0.9M43.6 32.2h0.9M40.7 33.5h0.5M40.5 28.4h0.5M41.3 31.4h0.5M43.2 28.2h0.9M39.8 29.9h0.9M46.5 27.4h0.7M39.9 30.9h0.9M44.8 33.5h0.7M47.7 27.9h0.9M47.0 29.8h0.5M42.9 32.8h0.5M44.3 32.1h0.5M43.5 34.3h0.5M49.4 29.7h0.5M44.0 34.4h0.9M42.9 28.1h0.9M43.6 39.5h0.9M50.6 43.3h0.5M46.3 45.3h0.5M44.3 50.9h0.5M39.3 44.6h0.5M49.0 42.3h0.5M47.0 51.0h0.5M43.2 50.5h0.7M45.8 43.7h0.7M42.9 37.9h0.5M50.9 43.9h0.9M41.2 45.7h0.7M49.3 45.4h0.5M50.5 45.4h0.7M42.3 40.8h0.9M42.5 51.6h0.5M43.6 37.6h0.7M44.1 52.0h0.5M43.9 40.0h0.5M49.0 44.5h0.9M39.4 38.5h0.5M45.4 38.6h0.5M46.7 45.0h0.5M42.5 48.8h0.5M38.5 41.5h0.9M45.4 41.8h0.7M40.6 43.2h0.7M44.7 51.7h0.9M44.6 52.1h0.9M42.4 42.5h0.9M39.9 42.1h0.5M41.8 46.1h0.5M38.0 40.6h0.9M45.1 39.7h0.5M37.3 42.7h0.9M39.5 43.5h0.5M41.9 37.2h0.5M38.6 41.0h0.9M41.8 46.9h0.9M48.9 47.8h0.7M45.9 52.2h0.7M47.7 38.5h0.7M48.9 43.6h0.9M45.7 39.9h0.5M43.1 46.6h0.7M43.6 39.6h0.5M39.0 41.1h0.9M42.8 46.3h0.9M48.4 41.0h0.7M51.5 43.5h0.5M45.4 43.7h0.5M46.6 51.3h0.9M45.1 38.5h0.5M47.2 44.5h0.7M47.1 49.0h0.9M48.8 38.4h0.5M40.5 39.0h0.7M42.4 42.9h0.7M48.4 44.8h0.7M39.3 42.4h0.9M47.1 41.0h0.5M36.6 42.6h0.5M41.8 43.9h0.9M36.6 39.0h0.5M42.1 38.9h0.7M50.4 45.3h0.5M45.1 50.7h0.5M41.5 47.4h0.5M45.3 49.9h0.7M46.6 43.5h0.7M42.5 42.3h0.7M49.7 45.2h0.5M44.9 51.8h0.9M44.0 49.1h0.7M48.3 48.5h0.7M37.1 42.7h0.9M46.7 44.5h0.7M45.4 48.6h0.7M45.3 42.0h0.5M46.9 38.5h0.5M46.5 39.3h0.9M48.6 40.9h0.5M38.5 43.8h0.5M42.0 49.9h0.5M41.9 41.1h0.5M37.5 42.4h0.7M43.5 46.4h0.7M45.2 38.0h0.7M39.7 40.9h0.7M44.1 38.0h0.9M47.3 47.6h0.9M39.0 42.2h0.5M45.3 40.3h0.7M46.0 39.3h0.9M43.1 42.4h0.5M44.9 42.4h0.5M38.7 39.3h0.7M42.5 44.0h0.7M46.7 45.5h0.7M40.7 38.4h0.9M44.2 53.0h0.9M53.6 29.7h0.9M58.5 37.7h0.9M58.3 35.4h0.7M56.2 32.4h0.7M63.1 38.4h0.7M60.4 34.0h0.9M53.1 27.4h0.9M56.1 30.3h0.7M68.4 30.4h0.5M58.2 29.0h0.7M57.6 31.5h0.9M62.8 33.4h0.9M60.3 38.1h0.9M66.2 31.7h0.5M64.1 33.3h0.9M62.9 30.1h0.7M55.1 31.3h0.9M56.9 30.3h0.5M52.1 30.8h0.9M54.8 31.2h0.5M68.8 28.8h0.5M59.7 30.3h0.7M63.5 33.8h0.7M61.3 33.5h0.7M70.3 27.8h0.9M53.0 28.0h0.7M63.2 41.6h0.5M60.1 40.2h0.7M70.0 29.1h0.9M67.6 28.3h0.5M59.2 32.5h0.5M65.7 35.3h0.5M65.9 37.4h0.5M59.3 35.1h0.7M56.8 38.1h0.7M58.6 35.7h0.5M62.1 34.5h0.9M65.5 32.7h0.7M65.2 29.4h0.7M65.6 35.9h0.5M58.9 28.3h0.7M59.8 31.5h0.7M63.8 39.3h0.7M66.5 30.8h0.9M56.2 39.2h0.9M65.0 41.0h0.9M61.2 32.7h0.5M53.9 39.2h0.9M54.2 28.1h0.9M52.3 36.7h0.9M62.2 42.5h0.5M55.4 28.8h0.9M57.0 27.9h0.9M64.7 38.3h0.9M63.3 31.2h0.7M56.3 37.6h0.9M56.5 31.0h0.7M64.7 28.2h0.5M59.5 29.9h0.7M69.0 27.5h0.7M65.5 34.0h0.5M54.9 34.0h0.7M55.1 29.9h0.7M63.7 32.2h0.7M54.8 32.2h0.5M57.5 29.8h0.5M58.7 37.1h0.7M59.0 29.6h0.5M53.4 38.2h0.7M59.1 32.6h0.9M64.2 33.5h0.5M56.9 37.2h0.7M57.2 40.5h0.5M69.1 32.1h0.7M54.2 30.3h0.9M63.6 39.5h0.5M57.2 28.7h0.5M68.6 29.4h0.5M56.9 27.5h0.9M61.0 29.8h0.9M57.3 32.6h0.9M67.8 32.6h0.9M70.9 28.5h0.7M56.4 40.1h0.5M53.2 36.9h0.5M64.3 35.2h0.7M64.6 37.1h0.7M52.4 32.6h0.7M66.5 27.7h0.7M58.9 28.7h0.9M62.5 40.4h0.7M67.6 28.3h0.9M63.7 42.9h0.9M69.2 28.9h0.5M60.3 35.8h0.7M64.1 38.9h0.5M64.6 31.1h0.7M64.0 38.1h0.5M61.4 37.8h0.7M56.6 40.1h0.7M51.3 31.7h0.5M64.3 34.7h0.7M56.1 30.1h0.9M51.2 28.1h0.9M60.8 39.7h0.7M66.5 29.3h0.9M66.5 32.5h0.5M69.5 31.2h0.7M62.9 30.4h0.9M52.8 33.4h0.5M53.8 34.3h0.9M59.2 29.7h0.5M62.9 34.4h0.5M61.7 27.4h0.7M50.7 32.7h0.7M53.4 28.3h0.9M62.8 31.9h0.9M58.5 37.0h0.5M61.5 39.9h0.7M65.5 27.1h0.7M59.9 40.1h0.7M59.5 35.9h0.7M65.1 37.1h0.9M58.0 30.1h0.9M54.6 39.8h0.7M56.9 27.8h0.9M66.9 35.1h0.9M62.4 37.6h0.5M50.9 29.6h0.9M59.2 33.9h0.5M63.1 33.8h0.7M60.5 39.6h0.9M52.7 34.5h0.7M56.2 29.6h0.9M64.3 29.4h0.7M61.5 43.9h0.9M56.8 27.2h0.5M50.5 32.6h0.5M61.3 42.1h0.9M56.6 31.8h0.7M61.1 30.1h0.7M61.7 32.7h0.7M51.8 31.9h0.5M69.0 31.0h0.9M54.8 29.7h0.7M56.6 32.5h0.5M53.1 35.4h0.5M55.7 28.4h0.7M65.1 29.8h0.7M61.4 28.1h0.7M57.8 34.1h0.9M68.9 28.1h0.9M58.5 36.6h0.7M53.8 37.9h0.9M57.6 32.6h0.7M55.5 40.6h0.5M61.1 42.4h0.7M68.3 31.6h0.9M64.6 29.6h0.5M60.9 30.2h0.9M61.6 43.4h0.7M69.7 32.2h0.7M53.4 29.8h0.7M59.3 35.7h0.9M51.7 32.4h0.5M63.1 33.0h0.7M56.8 34.9h0.7M67.2 53.1h0.5M70.1 50.6h0.7M71.5 50.2h0.9M66.5 51.2h0.9M71.0 51.5h0.5M67.1 47.7h0.7M68.1 51.2h0.7M66.3 52.8h0.9M68.7 49.7h0.9M69.2 48.5h0.9M65.1 53.5h0.9M69.7 47.0h0.9M67.6 48.6h0.9M69.7 49.5h0.9M71.2 50.5h0.9M67.6 53.6h0.5M69.7 49.9h0.9M69.7 49.6h0.7M67.9 51.7h0.5M65.4 52.6h0.5M66.9 48.1h0.5M71.6 49.5h0.5M68.5 46.6h0.7M64.9 50.0h0.5M65.4 51.6h0.7M66.5 54.4h0.5M69.6 52.4h0.9M70.5 49.6h0.9M68.4 51.3h0.5M67.7 47.7h0.5M68.7 52.2h0.9M69.2 53.5h0.7M67.1 50.7h0.9M67.3 52.8h0.5M69.9 51.9h0.7M42.2 26.5h0.9M41.7 25.8h0.7M42.4 26.3h0.9M50.5 22.6h0.5M52.6 23.6h0.7M52.1 22.3h0.9M51.2 22.7h0.9M53.2 23.0h0.5M52.8 22.0h0.5M68.9 23.4h0.5M35.3 31.2h0.5M44.5 41.9h0.5M23.4 58.4h0.5M32.6 43.3h0.5M50.2 28.9h0.5M28.8 38.8h0.5M12.7 54.8h0.5M15.1 22.1h0.5M33.5 48.1h0.5M35.2 25.3h0.5M42.5 52.1h0.5M75.7 38.0h0.5M21.7 25.6h0.5M48.9 59.2h0.5M47.9 41.7h0.5M35.0 50.8h0.5M29.1 44.7h0.5M49.0 58.8h0.5M36.3 52.2h0.5M18.9 31.2h0.5M62.0 55.5h0.5M20.0 24.7h0.5M61.1 26.3h0.5M63.8 31.0h0.5M42.1 42.8h0.5M55.1 32.4h0.5M38.3 45.8h0.5M21.6 36.6h0.5M12.6 53.0h0.5M23.4 47.3h0.5M15.1 48.6h0.5M58.0 58.8h0.5M29.1 59.9h0.5M44.6 49.9h0.5M60.9 44.4h0.5M36.6 38.4h0.5M29.0 56.3h0.5M24.6 33.8h0.5M45.1 36.3h0.5M42.8 26.0h0.5" stroke="#DCE6E3" stroke-width="0.6" opacity="0.5" fill="none"/><rect x="18.5" y="30.6" width="1.2" height="1.2" fill="#EFD36A"/><rect x="22.8" y="35.9" width="1.2" height="1.2" fill="#EFD36A"/><rect x="22.7" y="45.0" width="2.0" height="2.0" fill="#EFD36A"/><rect x="38.9" y="33.7" width="2.0" height="2.0" fill="#E58585"/><rect x="42.0" y="31.1" width="1.0" height="1.0" fill="#E58585"/><rect x="37.8" y="40.2" width="1.3" height="1.3" fill="#EFD36A"/><rect x="45.9" y="42.9" width="1.2" height="1.2" fill="#E58585"/><rect x="86.8" y="27" width="1.0" height="2" fill="#EFD36A"/><path d="M89.8 26.60 H97.7" stroke="#F4F7F6" stroke-width="2.4" stroke-dasharray="1.0 0.3 1.3 0.3 1.6 0.4" opacity="0.95" fill="none"/><path d="M89.8 30.40 H111.5" stroke="#E6ECEA" stroke-width="1.0" stroke-dasharray="1.6 0.6 3.1 0.8 3.1 0.6" opacity="0.84" fill="none"/><path d="M89.8 32.40 H94.8" stroke="#E6ECEA" stroke-width="1.0" stroke-dasharray="1.5 0.6 3.1 0.6 2.0 0.7" opacity="0.84" fill="none"/><rect x="86.8" y="37.8" width="1.0" height="2" fill="#E58585"/><path d="M89.8 37.60 H94.8" stroke="#F4F7F6" stroke-width="2.4" stroke-dasharray="1.2 0.3 1.7 0.3 0.8 0.4" opacity="0.95" fill="none"/><path d="M89.8 42.30 H108.7" stroke="#E6ECEA" stroke-width="1.0" stroke-dasharray="3.3 0.9 2.2 0.9 3.4 0.6" opacity="0.84" fill="none"/><path d="M89.8 44.40 H96.5" stroke="#E6ECEA" stroke-width="1.0" stroke-dasharray="3.0 0.8 2.8 0.7 1.9 0.6" opacity="0.84" fill="none"/><rect x="87.0" y="49.4" width="0.6" height="2" fill="#B3ABE3"/><path d="M89.8 49.50 H97.0" stroke="#F4F7F6" stroke-width="2.4" stroke-dasharray="1.0 0.3 1.4 0.3 1.6 0.3" opacity="0.95" fill="none"/><path d="M89.8 53.30 H110.6" stroke="#E6ECEA" stroke-width="1.0" stroke-dasharray="3.4 0.8 3.4 0.9 3.4 0.7" opacity="0.84" fill="none"/><path d="M89.8 55.30 H98.6" stroke="#E6ECEA" stroke-width="1.0" stroke-dasharray="1.2 0.8 1.6 0.6 2.8 0.7" opacity="0.84" fill="none"/></svg>
<div class="r" style="left:32px;top:489px;width:134px;height:77px;background:#F6F6F6;border:1px solid #CBCBCB;box-sizing:border-box"></div>
<svg class="r" style="left:34px;top:491px;background:#113A40;" width="130" height="73" viewBox="0 0 130 73"><path d="M46.8 12.55 H60.0" stroke="#E3DC86" stroke-width="1.7" stroke-dasharray="1.2 0.4 1.4 0.3 1.1 0.4" opacity="0.95" fill="none"/><path d="M60.6 12.55 H82.9" stroke="#F2F2F2" stroke-width="1.7" stroke-dasharray="1.3 0.4 1.2 0.3 1.3 0.4" opacity="0.95" fill="none"/><path d="M18 47.7 C40 46.9 60 48.3 80 47.5 S100 47.2 113 47.7" stroke="#F2F6F4" stroke-width="1.6" stroke-linecap="round" fill="none"/><path d="M16.9 27.50 H33.9" stroke="#E6ECEA" stroke-width="1.0" stroke-dasharray="1.6 0.8 3.4 0.8 3.2 0.5" opacity="0.84" fill="none"/><path d="M14.6 30.40 H36.2" stroke="#E6ECEA" stroke-width="1.0" stroke-dasharray="2.7 0.8 1.3 0.6 1.8 0.7" opacity="0.84" fill="none"/><path d="M15.2 32.50 H35.6" stroke="#E6ECEA" stroke-width="1.0" stroke-dasharray="2.2 0.7 3.1 0.5 1.3 0.6" opacity="0.84" fill="none"/><path d="M25.799999999999997 44 V40.2" stroke="#F2F6F4" stroke-width="0.7"/><circle cx="25.599999999999998" cy="39" r="1.2" fill="none" stroke="#F2F6F4" stroke-width="0.6"/><circle cx="25.4" cy="47.5" r="3.3" fill="#5F5A62" stroke="#F2F6F4" stroke-width="0.9"/><circle cx="25.4" cy="47.5" r="1.9" fill="#9A6F76"/><circle cx="25.7" cy="47.2" r="0.8" fill="#F2E6E6" opacity="0.85"/><path d="M20.8 55.30 H30.0" stroke="#F2F6F4" stroke-width="2.0" stroke-dasharray="0.9 0.3 1.8 0.4 0.9 0.4" opacity="0.95" fill="none"/><path d="M41.0 27.50 H62.6" stroke="#E6ECEA" stroke-width="1.0" stroke-dasharray="2.0 0.6 2.0 0.8 2.6 0.6" opacity="0.84" fill="none"/><path d="M42.8 30.40 H60.8" stroke="#E6ECEA" stroke-width="1.0" stroke-dasharray="1.7 0.6 1.5 0.7 2.9 0.7" opacity="0.84" fill="none"/><path d="M46.3 32.50 H57.3" stroke="#E6ECEA" stroke-width="1.0" stroke-dasharray="1.4 0.6 2.1 0.7 3.1 0.7" opacity="0.84" fill="none"/><path d="M52.199999999999996 44 V40.2" stroke="#F2F6F4" stroke-width="0.7"/><circle cx="52.0" cy="39" r="1.2" fill="none" stroke="#F2F6F4" stroke-width="0.6"/><circle cx="51.8" cy="47.5" r="3.3" fill="#5F5A62" stroke="#F2F6F4" stroke-width="0.9"/><circle cx="51.8" cy="47.5" r="1.9" fill="#9A6F76"/><circle cx="52.099999999999994" cy="47.2" r="0.8" fill="#F2E6E6" opacity="0.85"/><path d="M48.9 55.30 H55.1" stroke="#F2F6F4" stroke-width="2.0" stroke-dasharray="1.6 0.4 1.2 0.3 1.3 0.4" opacity="0.95" fill="none"/><path d="M69.5 27.50 H86.5" stroke="#E6ECEA" stroke-width="1.0" stroke-dasharray="2.2 0.8 2.3 0.6 2.5 0.8" opacity="0.84" fill="none"/><path d="M67.2 30.40 H88.8" stroke="#E6ECEA" stroke-width="1.0" stroke-dasharray="1.4 0.7 2.2 0.9 3.4 0.6" opacity="0.84" fill="none"/><path d="M67.8 32.50 H88.2" stroke="#E6ECEA" stroke-width="1.0" stroke-dasharray="3.4 0.8 1.8 0.7 1.5 0.8" opacity="0.84" fill="none"/><path d="M78.4 44 V40.2" stroke="#F2F6F4" stroke-width="0.7"/><circle cx="78.2" cy="39" r="1.2" fill="none" stroke="#F2F6F4" stroke-width="0.6"/><circle cx="78" cy="47.5" r="3.3" fill="#5F5A62" stroke="#F2F6F4" stroke-width="0.9"/><circle cx="78" cy="47.5" r="1.9" fill="#9A6F76"/><circle cx="78.3" cy="47.2" r="0.8" fill="#F2E6E6" opacity="0.85"/><path d="M74.3 55.30 H82.0" stroke="#F2F6F4" stroke-width="2.0" stroke-dasharray="1.5 0.4 1.6 0.4 1.5 0.4" opacity="0.95" fill="none"/><path d="M93.8 27.50 H115.4" stroke="#E6ECEA" stroke-width="1.0" stroke-dasharray="1.4 0.7 1.2 0.6 3.1 0.5" opacity="0.84" fill="none"/><path d="M95.6 30.40 H113.6" stroke="#E6ECEA" stroke-width="1.0" stroke-dasharray="1.4 0.5 3.3 0.6 1.3 0.8" opacity="0.84" fill="none"/><path d="M99.1 32.50 H110.1" stroke="#E6ECEA" stroke-width="1.0" stroke-dasharray="1.5 0.8 2.8 0.8 3.5 0.7" opacity="0.84" fill="none"/><path d="M105.0 44 V40.2" stroke="#F2F6F4" stroke-width="0.7"/><circle cx="104.8" cy="39" r="1.2" fill="none" stroke="#F2F6F4" stroke-width="0.6"/><circle cx="104.6" cy="47.5" r="3.3" fill="#5F5A62" stroke="#F2F6F4" stroke-width="0.9"/><circle cx="104.6" cy="47.5" r="1.9" fill="#9A6F76"/><circle cx="104.89999999999999" cy="47.2" r="0.8" fill="#F2E6E6" opacity="0.85"/><path d="M101.7 55.30 H107.3" stroke="#F2F6F4" stroke-width="2.0" stroke-dasharray="1.6 0.3 1.6 0.4 1.5 0.3" opacity="0.95" fill="none"/></svg>
<div class="r" style="left:30px;top:582px;width:138.5px;height:81px;background:#C8421F"></div>
<div class="r" style="left:33px;top:585px;width:132.5px;height:75px;background:#F4F4F4"></div>
<div class="r" style="left:34px;top:586px;width:130px;height:73px;background:#113A40;overflow:hidden"><div style="position:absolute;left:0;top:0;width:880px;height:495px;transform:scale(0.14773);transform-origin:0 0"><svg class="r" style="left:0;top:0" width="880" height="495" viewBox="0 0 880 495"><path d="M404.8 255.8 L420.9 245.6 M398.1 263.2 L432.9 243.0 M393.7 270.5 L441.1 241.9 M392.6 274.6 L447.1 242.3 M390.3 281.2 L449.9 244.3 M388.7 285.9 L455.6 245.4 M388.4 289.6 L459.6 246.2 M388.8 293.6 L463.3 248.2 M388.6 298.1 L466.7 250.1 M390.5 301.1 L469.8 252.7 M391.3 304.1 L471.9 255.3 M391.9 308.4 L475.3 258.1 M393.0 311.1 L477.7 260.5 M394.5 314.4 L479.6 263.6 M394.3 319.1 L483.0 265.6 M396.3 321.6 L484.2 269.2 M398.6 324.1 L486.1 272.1 M401.5 327.3 L487.3 274.6 M402.6 330.4 L488.2 279.2 M405.7 331.8 L490.5 282.0 M409.9 334.5 L490.2 285.7 M412.1 336.7 L489.8 290.0 M415.3 339.8 L490.9 293.2 M419.7 340.3 L490.5 298.3 M423.8 342.0 L490.6 301.7 M426.6 344.7 L488.8 306.6 M432.5 344.9 L488.4 310.9 M438.2 345.6 L486.1 316.7 M443.7 345.9 L483.8 322.0 M454.9 343.5 L477.2 330.8" fill="none" stroke="#F5E38D" stroke-width="3.045" stroke-linecap="round" opacity="1"/><path d="M403.3 261.3 L417.6 251.3 M395.3 275.2 L432.3 246.3 M393.8 285.4 L443.1 245.9 M391.7 293.9 L452.2 246.8 M391.0 301.5 L459.3 249.2 M394.8 307.7 L465.2 251.8 M395.9 313.0 L470.7 255.4 M398.3 319.7 L475.6 260.2 M401.9 324.5 L477.7 265.7 M405.6 329.1 L481.5 271.0 M412.1 332.5 L485.1 274.6 M415.5 337.0 L488.0 280.5 M421.4 340.5 L488.0 287.9 M430.0 341.3 L489.1 295.0 M438.4 343.6 L489.4 302.5 M447.7 342.2 L485.2 313.7 M463.0 339.0 L477.2 326.8" fill="none" stroke="#F5E38D" stroke-width="1.3" stroke-linecap="round" opacity="0.9"/><path d="M423.6 315.5 L433.4 328.9 M412.2 307.0 L436.3 343.2 M403.8 302.8 L436.8 352.2 M397.3 300.0 L435.3 360.3 M391.4 300.5 L434.2 365.5 M384.3 298.2 L432.7 372.1 M379.7 299.3 L428.7 375.0 M374.2 300.0 L427.6 380.9 M369.6 302.0 L422.8 382.7 M366.3 304.2 L419.1 387.0 M362.1 305.7 L415.7 390.0 M357.9 308.9 L412.7 394.1 M353.7 310.3 L408.1 395.7 M350.2 313.5 L403.5 396.9 M347.4 318.0 L399.3 399.5 M343.7 321.7 L395.1 400.2 M340.5 326.2 L390.2 401.9 M338.6 331.3 L384.1 402.1 M336.1 335.8 L378.3 401.2 M334.6 341.3 L372.2 400.9 M333.8 349.6 L365.4 399.0 M334.1 359.8 L357.5 394.2" fill="none" stroke="#A9A1D3" stroke-width="2.9" stroke-linecap="round" opacity="1"/><path d="M450.5 330.8 L461.4 314.5 M447.6 343.2 L473.1 305.0 M447.8 353.4 L481.1 301.9 M449.7 359.2 L487.2 300.2 M450.5 365.4 L493.3 300.4 M453.0 370.8 L500.2 298.4 M455.1 376.5 L505.6 298.6 M458.1 379.5 L509.7 301.6 M460.6 383.9 L514.4 302.6 M465.1 386.6 L519.2 302.2 M469.0 389.6 L523.3 305.3 M471.8 393.0 L527.5 307.6 M475.9 395.2 L531.0 311.9 M481.2 397.0 L533.8 314.8 M485.6 398.4 L537.7 318.5 M490.1 400.0 L541.8 320.7 M494.3 401.5 L545.2 324.9 M499.8 402.5 L545.6 330.8 M506.3 401.9 L547.9 336.3 M512.8 399.9 L550.7 341.0 M519.5 396.7 L550.6 350.7 M527.8 394.4 L550.7 357.4" fill="none" stroke="#E3938F" stroke-width="2.9" stroke-linecap="round" opacity="1"/><circle cx="440.0" cy="294.0" r="56.6" fill="none" stroke="#E9EFED" stroke-width="5.4"/><circle cx="385.2" cy="350.3" r="56.6" fill="none" stroke="#E9EFED" stroke-width="5.4"/><circle cx="499.3" cy="350.3" r="56.6" fill="none" stroke="#E9EFED" stroke-width="5.4"/><path d="M440 214.5 V237 M301 350.2 H329 M556 350.2 H583" stroke="#E9EFED" stroke-width="5.8"/></svg><span class="t" style="left:327.8px;top:71.9px;font-size:31.4px;color:#E9EFED;font-weight:700;transform:scaleX(0.3941);">HOW</span><span class="t" style="left:364.2px;top:71.3px;font-size:32.1px;color:#E9EFED;font-weight:700;transform:scaleX(0.4010);">ABOUT</span><span class="t" style="left:415.2px;top:71.4px;font-size:31.4px;color:#E9EFED;font-weight:700;transform:scaleX(0.4214);">THE</span><span class="t" style="left:446.5px;top:71.3px;font-size:32.1px;color:#B3D39E;font-weight:700;transform:scaleX(0.4074);">PERCENTAGES</span><span class="t" style="left:545.2px;top:78.3px;font-size:20.3px;color:#E9EFED;font-weight:700;transform:scaleX(0.4661);">?</span><span class="t" style="left:431.1px;top:123.6px;font-size:18.2px;color:#E9EFED;font-weight:700;transform:scaleX(0.5256);">55%</span><span class="t" style="left:414.3px;top:141.0px;font-size:23.0px;color:#E9EFED;font-weight:700;transform:scaleX(0.4581);">MERCURY</span><span class="t" style="left:260.2px;top:306.6px;font-size:18.2px;color:#E9EFED;font-weight:700;transform:scaleX(0.4569);">15%</span><span class="t" style="left:241.9px;top:324.7px;font-size:22.8px;color:#E9EFED;font-weight:700;transform:scaleX(0.4516);">VENUS</span><span class="t" style="left:603.1px;top:306.6px;font-size:18.2px;color:#E9EFED;font-weight:700;transform:scaleX(0.5545);">30%</span><span class="t" style="left:603.1px;top:324.7px;font-size:22.8px;color:#E9EFED;font-weight:700;transform:scaleX(0.4402);">NEPTUNE</span><span class="t" style="left:367.9px;top:171.5px;font-size:11.7px;color:#E6ECEA;font-weight:700;transform:scaleX(0.8315);">Mercury is the closest planet to</span><span class="t" style="left:423.3px;top:186.5px;font-size:11.7px;color:#E6ECEA;font-weight:700;transform:scaleX(0.8232);">the Sun</span><span class="t" style="left:128.9px;top:354.4px;font-size:11.7px;color:#E6ECEA;font-weight:700;transform:scaleX(0.8318);">Venus has a beautiful name, but</span><span class="t" style="left:210.0px;top:369.5px;font-size:11.7px;color:#E6ECEA;font-weight:700;transform:scaleX(0.8301);">it’s terribly hot</span><span class="t" style="left:603.8px;top:354.4px;font-size:11.7px;color:#E6ECEA;font-weight:700;transform:scaleX(0.8499);">Neptune is the farthest planet</span><span class="t" style="left:604.3px;top:369.5px;font-size:11.7px;color:#E6ECEA;font-weight:700;transform:scaleX(0.8424);">from the Sun</span></div></div>
<div class="r" style="left:32px;top:679px;width:134px;height:77px;background:#F6F6F6;border:1px solid #CBCBCB;box-sizing:border-box"></div>
<svg class="r" style="left:34px;top:681px;background:#113A40;" width="130" height="73" viewBox="0 0 130 73"><path d="M41.0 12.40 H70.0" stroke="#F2F2F2" stroke-width="1.6" stroke-dasharray="1.5 0.4 0.9 0.3 1.4 0.4" opacity="0.95" fill="none"/><path d="M70.5 12.40 H88.2" stroke="#B9D7A4" stroke-width="1.6" stroke-dasharray="1.0 0.3 1.0 0.4 1.6 0.3" opacity="0.95" fill="none"/><rect x="42.2" y="26.2" width="7.2" height="12" fill="none" stroke="#F2F6F4" stroke-width="0.8"/><rect x="53.9" y="26.2" width="8.5" height="12" fill="none" stroke="#F2F6F4" stroke-width="0.8"/><rect x="67.3" y="26.2" width="7.9" height="12" fill="none" stroke="#F2F6F4" stroke-width="0.8"/><rect x="80.3" y="26.2" width="8.3" height="12" fill="#8E8CC0" stroke="#F2F6F4" stroke-width="0.8"/><path d="M27.6 30.40 H32.5" stroke="#E58585" stroke-width="1.6" stroke-dasharray="1.2 0.3 1.2 0.3 0.9 0.4" opacity="0.95" fill="none"/><path d="M98.0 30.50 H106.0" stroke="#EFD36A" stroke-width="1.8" stroke-dasharray="1.8 0.3 1.5 0.3 1.5 0.4" opacity="0.95" fill="none"/></svg>
<span class="t" style="left:2.1px;top:202.9px;font-size:14.6px;color:#505050;transform:scaleX(1.0059);">15</span>
<span class="t" style="left:2.1px;top:297.9px;font-size:14.6px;color:#505050;transform:scaleX(1.0079);">16</span>
<span class="t" style="left:2.1px;top:392.9px;font-size:14.6px;color:#505050;transform:scaleX(1.0144);">17</span>
<span class="t" style="left:2.1px;top:487.9px;font-size:14.6px;color:#505050;transform:scaleX(1.0074);">18</span>
<span class="t" style="left:2.1px;top:582.9px;font-size:14.6px;color:#C8421F;transform:scaleX(1.0114);">19</span>
<span class="t" style="left:2.5px;top:677.9px;font-size:14.6px;color:#505050;transform:scaleX(0.9776);">20</span>
<div class="r" style="left:185px;top:160px;width:15px;height:554px;background:#DBDBDB;"></div>
<div class="r" style="left:185px;top:160px;width:15px;height:14.5px;background:#FDFDFD;border:1px solid #C6C6C6;box-sizing:border-box"></div>
<div class="r" style="left:185px;top:697px;width:15px;height:14.5px;background:#FDFDFD;border:1px solid #C6C6C6;box-sizing:border-box"></div>
<div class="r" style="left:185px;top:320.5px;width:15px;height:61px;background:#FDFDFD;border:1px solid #C6C6C6;box-sizing:border-box"></div>
<div class="r" style="left:204px;top:160px;width:1px;height:554px;background:#ABABAB;"></div>
<svg class="r" style="left:0;top:0" width="1300" height="735" viewBox="0 0 1300 735"><g transform="translate(1290.5 164.5)"><path d="M0.6 5 L4 1.2 L7.4 5 Z" fill="#6A6A6A"/></g><g transform="translate(1290.5 613.5)"><path d="M0.6 1 L4 4.8 L7.4 1 Z" fill="#6A6A6A"/></g><g transform="translate(1290 627)"><path d="M0.8 5 L4.5 1 L8.2 5 Z M0.8 9.6 L4.5 5.6 L8.2 9.6 Z" fill="#5A5A5A"/></g><g transform="translate(1290 643.5)"><path d="M0.8 1 L4.5 5 L8.2 1 Z M0.8 5.6 L4.5 9.6 L8.2 5.6 Z" fill="#5A5A5A"/></g><g transform="translate(1256 427)"><path d="M1.5 1.5 V17 L5.2 13.6 L7.8 19.6 L10.2 18.6 L7.6 12.8 H12.6 Z" fill="#fff" stroke="#222" stroke-width="1.1" stroke-linejoin="round"/></g><g transform="translate(189 164.5)"><path d="M0.6 5 L4 1.2 L7.4 5 Z" fill="#8A8A8A"/></g><g transform="translate(189 701.5)"><path d="M0.6 1 L4 4.8 L7.4 1 Z" fill="#6A6A6A"/></g></svg>
<div class="r" style="left:0px;top:0px;width:1300px;height:31px;background:#B7472A;"></div>
<span class="t" style="left:21.0px;top:7.7px;font-size:12.1px;color:#fff;transform:scaleX(0.9690);">AutoSave</span>
<span class="t" style="left:96.8px;top:8.0px;font-size:10.6px;color:#fff;transform:scaleX(0.9215);">Off</span>
<span class="t" style="left:498.0px;top:7.7px;font-size:12.1px;color:#fff;transform:scaleX(0.9752);">Chalkboard Background by Slidesgo</span>
<span class="t" style="left:694.3px;top:7.7px;font-size:12.1px;color:#fff;transform:scaleX(1.3540);">-</span>
<span class="t" style="left:704.5px;top:7.7px;font-size:12.1px;color:#fff;transform:scaleX(0.9538);">Saved to this PC</span>
<div class="r" style="left:957px;top:4px;width:95px;height:20px;background:#A80000;"></div>
<div class="r" style="left:1056px;top:1.5px;width:24px;height:24px;border-radius:12px;background:#C239B3"></div>
<span class="t" style="left:1058.4px;top:8.2px;font-size:11px;color:#fff;transform:scaleX(1.1185);">CM</span>
<div class="r" style="left:1184px;top:13px;width:10px;height:1px;background:#fff;"></div>
<div class="r" style="left:1230px;top:8px;width:8.6px;height:8.6px;border:1.2px solid #fff"></div>
<div class="r" style="left:0px;top:31px;width:1300px;height:126px;background:#F3F2F1;"></div>
<div class="r" style="left:0px;top:156px;width:1300px;height:1px;background:#F7F6F5;"></div>
<span class="t" style="left:14.2px;top:40.7px;font-size:12.9px;color:#444;transform:scaleX(0.9815);">File</span>
<span class="t" style="left:130.1px;top:40.7px;font-size:12.9px;color:#444;transform:scaleX(1.0330);">Insert</span>
<span class="t" style="left:190.9px;top:40.7px;font-size:12.9px;color:#444;transform:scaleX(1.0455);">Design</span>
<span class="t" style="left:261.2px;top:40.7px;font-size:12.9px;color:#444;transform:scaleX(0.9943);">Transitions</span>
<span class="t" style="left:354.3px;top:40.7px;font-size:12.9px;color:#444;transform:scaleX(1.0060);">Animations</span>
<span class="t" style="left:448.4px;top:40.7px;font-size:12.9px;color:#444;transform:scaleX(0.9846);">Slide Show</span>
<span class="t" style="left:540.4px;top:40.7px;font-size:12.9px;color:#444;transform:scaleX(0.9595);">Review</span>
<span class="t" style="left:608.5px;top:40.7px;font-size:12.9px;color:#444;transform:scaleX(0.9891);">View</span>
<span class="t" style="left:662.9px;top:40.7px;font-size:12.9px;color:#444;transform:scaleX(1.0710);">Help</span>
<span class="t" style="left:720.0px;top:40.7px;font-size:12.9px;color:#444;transform:scaleX(1.0375);">Acrobat</span>
<span class="t" style="left:833.8px;top:40.7px;font-size:12.9px;color:#444;transform:scaleX(0.9683);">Search</span>
<span class="t" style="left:65.1px;top:40.7px;font-size:12.9px;color:#3B3A39;transform:scaleX(1.1349);-webkit-text-stroke:0.45px #3B3A39;">Home</span>
<div class="r" style="left:66px;top:55.5px;width:38px;height:3px;background:#B7472A;"></div>
<div class="r" style="left:1116px;top:34px;width:67px;height:23px;border:1px solid #E4DCD9;background:#F6F5F4;box-sizing:border-box"></div>
<div class="r" style="left:1192px;top:34px;width:99.5px;height:23px;border:1px solid #E4DCD9;background:#F6F5F4;box-sizing:border-box"></div>
<span class="t" style="left:1139.8px;top:40.0px;font-size:13.1px;color:#B7472A;transform:scaleX(0.9887);-webkit-text-stroke:0.45px #B7472A;">Share</span>
<span class="t" style="left:1215.8px;top:40.0px;font-size:13.1px;color:#B7472A;transform:scaleX(1.0500);-webkit-text-stroke:0.45px #B7472A;">Comments</span>
<div class="r" style="left:93.5px;top:66px;width:1px;height:88px;background:#C8C6C4;"></div>
<div class="r" style="left:230.3px;top:66px;width:1px;height:88px;background:#C8C6C4;"></div>
<div class="r" style="left:511.5px;top:66px;width:1px;height:88px;background:#C8C6C4;"></div>
<div class="r" style="left:723.5px;top:66px;width:1px;height:88px;background:#C8C6C4;"></div>
<div class="r" style="left:986.5px;top:66px;width:1px;height:88px;background:#C8C6C4;"></div>
<div class="r" style="left:1088.5px;top:66px;width:1px;height:88px;background:#C8C6C4;"></div>
<div class="r" style="left:1201.3px;top:66px;width:1px;height:88px;background:#C8C6C4;"></div>
<div class="r" style="left:1259.5px;top:66px;width:1px;height:88px;background:#C8C6C4;"></div>
<span class="t" style="left:11.9px;top:143.1px;font-size:11.7px;color:#444;transform:scaleX(1.0363);">Clipboard</span>
<span class="t" style="left:146.5px;top:143.1px;font-size:11.7px;color:#444;transform:scaleX(0.9381);">Slides</span>
<span class="t" style="left:350.6px;top:143.1px;font-size:11.7px;color:#444;transform:scaleX(1.0462);">Font</span>
<span class="t" style="left:582.7px;top:143.1px;font-size:11.7px;color:#444;transform:scaleX(0.9826);">Paragraph</span>
<span class="t" style="left:825.0px;top:143.1px;font-size:11.7px;color:#444;transform:scaleX(1.0291);">Drawing</span>
<span class="t" style="left:1018.4px;top:143.1px;font-size:11.7px;color:#444;transform:scaleX(1.0687);">Editing</span>
<span class="t" style="left:1106.0px;top:143.1px;font-size:11.7px;color:#444;transform:scaleX(1.0046);">Adobe Acrobat</span>
<span class="t" style="left:1217.0px;top:143.1px;font-size:11.7px;color:#444;transform:scaleX(0.9554);">Voice</span>
<span class="t" style="left:12.4px;top:104.1px;font-size:12px;color:#444;transform:scaleX(0.9497);">Paste</span>
<span class="t" style="left:110.7px;top:104.1px;font-size:12px;color:#444;">New</span>
<span class="t" style="left:104.7px;top:119.6px;font-size:12px;color:#444;transform:scaleX(0.9529);">Slide</span>
<span class="t" style="left:165.5px;top:70.9px;font-size:12px;color:#444;transform:scaleX(1.0041);">Layout</span>
<span class="t" style="left:165.6px;top:94.7px;font-size:12px;color:#444;transform:scaleX(0.9083);">Reset</span>
<span class="t" style="left:165.7px;top:119.1px;font-size:12px;color:#444;transform:scaleX(0.9896);">Section</span>
<div class="r" style="left:239px;top:73px;width:144px;height:22.5px;border:1px solid #C8C6C4;box-sizing:border-box;background:#F3F2F1"></div>
<div class="r" style="left:383px;top:73px;width:46px;height:22.5px;border:1px solid #C8C6C4;box-sizing:border-box;background:#F3F2F1"></div>
<span class="t" style="left:432.0px;top:74.5px;font-size:20.4px;color:#B0AEAC;transform:scaleX(0.8871);">A</span>
<span class="t" style="left:455.0px;top:78.1px;font-size:16.2px;color:#B0AEAC;transform:scaleX(0.9495);">A</span>
<div class="r" style="left:477.2px;top:74.3px;width:1px;height:20.3px;background:#D2D0CE;"></div>
<span class="t" style="left:485.0px;top:74.0px;font-size:17.6px;color:#B0AEAC;transform:scaleX(0.7883);">A</span>
<span class="t" style="left:245.9px;top:108.7px;font-size:13.5px;color:#A6A4A2;font-weight:700;transform:scaleX(0.9109);">B</span>
<span class="t" style="left:268.6px;top:107.6px;font-size:15px;color:#A6A4A2;transform:scaleX(1.1998);font-style:italic;font-family:'Liberation Serif',serif;">I</span>
<span class="t" style="left:288.4px;top:108.2px;font-size:13px;color:#A6A4A2;transform:scaleX(1.0837);">U</span>
<div class="r" style="left:288.8px;top:121.3px;width:9.4px;height:1px;background:#A6A4A2;"></div>
<span class="t" style="left:310.9px;top:108.6px;font-size:13.5px;color:#A6A4A2;font-weight:700;transform:scaleX(0.8902);text-shadow:0.6px 0.8px 0.8px rgba(120,118,116,0.45);">S</span>
<span class="t" style="left:331.0px;top:110.1px;font-size:12px;color:#A6A4A2;transform:scaleX(1.0135);">ab</span>
<div class="r" style="left:330px;top:116.5px;width:15.6px;height:1px;background:#A6A4A2;"></div>
<span class="t" style="left:352.8px;top:107.5px;font-size:10.3px;color:#A6A4A2;transform:scaleX(1.1309);">AV</span>
<span class="t" style="left:388.3px;top:109.2px;font-size:13.5px;color:#A6A4A2;transform:scaleX(0.9766);">Aa</span>
<div class="r" style="left:425.3px;top:106.5px;width:1px;height:20px;background:#D2D0CE;"></div>
<div class="r" style="left:433px;top:120px;width:15.9px;height:3.8px;background:#B3B0AD;"></div>
<span class="t" style="left:473.3px;top:106.4px;font-size:14.6px;color:#A6A4A2;transform:scaleX(1.0226);">A</span>
<div class="r" style="left:470px;top:120px;width:15.8px;height:3.8px;background:#B3B0AD;"></div>
<span class="t" style="left:559.5px;top:75.0px;font-size:5.5px;color:#A6A4A2;transform:scaleX(1.2651);">1</span>
<span class="t" style="left:559.7px;top:81.0px;font-size:5.5px;color:#A6A4A2;transform:scaleX(1.1973);">2</span>
<span class="t" style="left:559.8px;top:87.0px;font-size:5.5px;color:#A6A4A2;transform:scaleX(1.1504);">3</span>
<span class="t" style="left:691.0px;top:67.5px;font-size:9.8px;color:#A6A4A2;transform:scaleX(1.1388);">A</span>
<div class="r" style="left:612.3px;top:106.5px;width:1px;height:20px;background:#D2D0CE;"></div>
<span class="t" style="left:733.5px;top:104.1px;font-size:12px;color:#444;transform:scaleX(0.9214);">Shapes</span>
<span class="t" style="left:777.0px;top:104.1px;font-size:12px;color:#444;transform:scaleX(0.9659);">Arrange</span>
<span class="t" style="left:828.4px;top:104.1px;font-size:12px;color:#A6A4A2;transform:scaleX(0.9893);">Quick</span>
<span class="t" style="left:822.7px;top:120.1px;font-size:12px;color:#A6A4A2;transform:scaleX(0.9401);">Styles</span>
<div class="r" style="left:870px;top:79.5px;width:16px;height:3.4px;background:#B3B0AD;"></div>
<span class="t" style="left:889.1px;top:70.1px;font-size:12px;color:#A6A4A2;transform:scaleX(0.9305);">Shape Fill</span>
<div class="r" style="left:870px;top:102.5px;width:16px;height:3.4px;background:#B3B0AD;"></div>
<span class="t" style="left:889.1px;top:93.1px;font-size:12px;color:#A6A4A2;transform:scaleX(0.9790);">Shape Outline</span>
<span class="t" style="left:889.1px;top:116.1px;font-size:12px;color:#A6A4A2;transform:scaleX(0.9440);">Shape Effects</span>
<span class="t" style="left:1016.7px;top:69.8px;font-size:12px;color:#444;transform:scaleX(1.0331);">Find</span>
<span class="t" style="left:1005.5px;top:90.0px;font-size:9.5px;color:#B146C2;transform:scaleX(1.1937);">b</span>
<span class="t" style="left:1008.5px;top:98.7px;font-size:9.5px;color:#2B88D8;transform:scaleX(1.2207);">c</span>
<span class="t" style="left:1016.8px;top:92.9px;font-size:12px;color:#444;transform:scaleX(0.9480);">Replace</span>
<span class="t" style="left:1017.2px;top:115.9px;font-size:12px;color:#444;transform:scaleX(0.9414);">Select</span>
<span class="t" style="left:1098.8px;top:104.1px;font-size:12px;color:#444;">Crear y compartir</span>
<span class="t" style="left:1107.0px;top:120.1px;font-size:12px;color:#444;transform:scaleX(0.9891);">PDF de Adobe</span>
<span class="t" style="left:1211.0px;top:104.1px;font-size:12px;color:#444;transform:scaleX(1.0326);">Dictate</span>
<svg class="r" style="left:0;top:0" width="1300" height="735" viewBox="0 0 1300 735"><rect x="78.4" y="5.6" width="36.8" height="14.8" rx="7.4" fill="none" stroke="#fff" stroke-width="1.1"/><circle cx="85.7" cy="13.1" r="3.3" fill="#F6EDEA"/><path d="M131.3 7.3 H146.5 V22.6 H133.4 L131.3 20.5 Z M134.6 7.3 V13 H143.3 V7.3 M135.5 22.6 V17.3 H142.9 V22.6" fill="none" stroke="#fff" stroke-width="1.1"/><path d="M161.3 7.4 V12.9 H167.4 M161.6 12.6 C164 8.6 167.5 7.2 170.6 7.5 C174.6 8 176 11.5 174.2 14.2 L166.2 22.8" fill="none" stroke="#E0846D" stroke-width="1.2"/><g transform="translate(180.0 11.1)"><path d="M1 1 L3.7 3.7 L6.4 1" fill="none" stroke="#E0846D" stroke-width="1.1"/></g><path d="M205 7.2 V12.9 H198.3 M206.6 6.8 A8 8 0 1 1 198.5 12.7" fill="none" stroke="#E0846D" stroke-width="1.2"/><path d="M227 7.7 H241.8 M228.6 7.7 V15.7 H240.3 V7.7 M234.4 15.7 V21.4 M230 21.5 H238.8" fill="none" stroke="#fff" stroke-width="1.15"/><path d="M233.3 9.8 L236.9 11.8 L233.3 13.8 Z" fill="none" stroke="#fff" stroke-width="0.9"/><path d="M259.7 11.4 H267" stroke="#fff" stroke-width="1.1"/><path d="M259.9 14 L263.35 16.9 L266.8 14" fill="none" stroke="#fff" stroke-width="1.5"/><g transform="translate(796 11)"><path d="M1 1.2 L4 4.8 L7 1.2 Z" fill="#fff"/></g><g transform="translate(1097 5)"><path d="M3.2 13.6 L9.2 4.2 L14 9.2 L4.8 15.4 Z M5.5 15 L7.5 17.3 L10.2 15.6 L9 13" fill="none" stroke="#fff" stroke-width="1.2" stroke-linejoin="round"/><path d="M12.5 3.6 L13.3 1.6 M14.6 5 L16.6 3.4 M15.4 7.4 L17.6 7.2" stroke="#fff" stroke-width="1.1"/></g><g transform="translate(1135.5 7.5)"><rect x="0.5" y="0.5" width="13" height="10" fill="none" stroke="#fff"/><path d="M0.5 2.8 H13.5 M7 9 V4.6 M4.8 6.6 L7 4.4 L9.2 6.6" fill="none" stroke="#fff"/></g><g transform="translate(1275.5 7.5)"><path d="M0.8 0.8 L11.2 11.2 M11.2 0.8 L0.8 11.2" stroke="#fff" stroke-width="1.1"/></g><circle cx="814.9" cy="44.5" r="4.7" fill="none" stroke="#5E5C5A" stroke-width="1.1"/><path d="M811.7 48.1 L806.4 53.8" stroke="#7A4A40" stroke-width="1.2"/><path d="M1128 45.5 H1124.8 V51.2 H1133.8 V48.6 M1127.6 49.2 C1127.8 45.6 1130 43.6 1133.6 43.4 M1131.6 40.8 L1134.4 43.4 L1131.6 46" fill="none" stroke="#B7472A" stroke-width="1.1"/><path d="M1201.3 42 H1210.6 V48.4 H1205.4 L1202.7 50.7 V48.4 H1201.3 Z" fill="none" stroke="#B7472A" stroke-width="1.1" stroke-linejoin="round"/><path d="M82.4 151.6 V145.4 H88.80000000000001 M85.2 148.4 L89.4 152.4 M85.4 152.4 H89.5 V148.4" fill="none" stroke="#555" stroke-width="1"/><path d="M499.8 151.6 V145.4 H506.2 M502.6 148.4 L506.8 152.4 M502.8 152.4 H506.90000000000003 V148.4" fill="none" stroke="#555" stroke-width="1"/><path d="M711.8 151.6 V145.4 H718.1999999999999 M714.5999999999999 148.4 L718.8 152.4 M714.8 152.4 H718.9 V148.4" fill="none" stroke="#555" stroke-width="1"/><path d="M975 151.6 V145.4 H981.4 M977.8 148.4 L982 152.4 M978 152.4 H982.1 V148.4" fill="none" stroke="#555" stroke-width="1"/><g transform="translate(1284.5 146.5)"><path d="M1 6.5 L6 1.5 L11 6.5" fill="none" stroke="#444" stroke-width="1.2"/></g><path d="M17.9 74.8 V95 H29" fill="none" stroke="#FAE0A0" stroke-width="1.3"/><path d="M21 73.5 H16.7 V96.2 H29 M32 73.5 H36.5 V81" fill="none" stroke="#E07B0C" stroke-width="1.2"/><path d="M20.5 76.5 V72.3 H23.7 C23.9 68.3 29.3 68.3 29.5 72.3 H32.5 V76.5 Z" fill="#F3F2F1" stroke="#6A6A6A" stroke-width="1"/><rect x="29.5" y="81.5" width="13" height="17" fill="#F7F6F5" stroke="#444" stroke-width="1.15"/><g transform="translate(22.4 122.7)"><path d="M1 1 L4.0 4 L7 1" fill="none" stroke="#444" stroke-width="1.15"/></g><path d="M56.5 68.2 L60.9 79.8 M61.5 68.2 L57.1 79.8" stroke="#505050" stroke-width="1.25" fill="none"/><rect x="54.3" y="80.2" width="3.5" height="3.5" rx="1.1" fill="none" stroke="#2B88D8" stroke-width="1.25"/><rect x="60.2" y="80.2" width="3.5" height="3.5" rx="1.1" fill="none" stroke="#2B88D8" stroke-width="1.25"/><path d="M56 105.5 H51.5 V92.4 H57.5 L59.6 94.4" fill="none" stroke="#444" stroke-width="1.1"/><path d="M57.5 95.4 H63.6 L66.6 98.6 V107.4 H57.5 Z M63.4 95.6 V98.8 H66.4" fill="#F7F6F5" stroke="#444" stroke-width="1.1"/><path d="M59.8 102 H64.3 M59.8 104.2 H64.3" stroke="#444" stroke-width="0.9"/><g transform="translate(72.2 97.5)"><path d="M1 1 L4.0 4 L7 1" fill="none" stroke="#444" stroke-width="1.15"/></g><path d="M51.4 123.3 L58 119.6 L63.2 125.9 L58.2 130.8 Z" fill="#FDF0D8" stroke="#E07B0C" stroke-width="1.2" stroke-linejoin="round"/><path d="M53.5 124.6 L60.6 127.6 M55.8 127.4 L60.6 127.6" stroke="#E07B0C" stroke-width="0.9" fill="none"/><path d="M58.3 118.9 L60.6 117.4 L64.6 124.2 L62.6 125.6 Z M61.6 119.2 L65.6 115.6 L67 117 L63.4 121.6" fill="#F3F2F1" stroke="#444" stroke-width="1.1" stroke-linejoin="round"/><path d="M122.2 72.2 H136.7 V93.6 H109.4 V76.6" fill="none" stroke="#444" stroke-width="1.2"/><path d="M122.2 74.7 H134.2 V91.1 H111.7 V77 M116 79.9 H134.2 M122.4 79.9 V91.1" fill="none" stroke="#6E6E6E" stroke-width="0.9"/><path d="M114.8 67 V82.1 M107 74.6 H121.6" stroke="#2FA050" stroke-width="1.5"/><g transform="translate(132.6 123.3)"><path d="M1 1 L4.0 4 L7 1" fill="none" stroke="#444" stroke-width="1.15"/></g><rect x="147.4" y="69.3" width="15.4" height="12.2" fill="none" stroke="#444" stroke-width="1.2"/><path d="M149.4 71.4 H160.8 V79.5 H149.4 Z M149.4 74.6 H160.8 M155.1 74.6 V79.5" fill="none" stroke="#6E6E6E" stroke-width="0.9"/><g transform="translate(204.2 74.7)"><path d="M1 1 L4.0 4 L7 1" fill="none" stroke="#444" stroke-width="1.15"/></g><path d="M154.9 93.5 H162.8 V105.4 H147.4 V98.8" fill="none" stroke="#444" stroke-width="1.2"/><path d="M155.4 95.8 H160.8 V103.4 H149.4 V99.4 M156.6 97.8 H160.8" fill="none" stroke="#6E6E6E" stroke-width="0.9"/><path d="M150.6 92.4 L147.6 95.7 L150.6 99 M147.8 95.7 C151.5 95.2 154.6 96.2 154.4 100.4" fill="none" stroke="#2B88D8" stroke-width="1.3"/><rect x="147.4" y="116.5" width="14.6" height="2" fill="none" stroke="#2FA050" stroke-width="1.1"/><rect x="147.4" y="120.5" width="14.6" height="11" fill="none" stroke="#444" stroke-width="1.2"/><rect x="149.5" y="122.5" width="10.4" height="6.8" fill="none" stroke="#6E6E6E" stroke-width="0.9"/><g transform="translate(207.2 122.9)"><path d="M1 1 L4.0 4 L7 1" fill="none" stroke="#444" stroke-width="1.15"/></g><g transform="translate(372.2 82.5)"><path d="M1 1 L4.0 4 L7 1" fill="none" stroke="#9E9C9A" stroke-width="1.0"/></g><g transform="translate(418.0 82.5)"><path d="M1 1 L4.0 4 L7 1" fill="none" stroke="#9E9C9A" stroke-width="1.0"/></g><g transform="translate(442.5 76.4)"><path d="M0.8 3.6 L3.3 1 L5.8 3.6" fill="none" stroke="#A6A4A2" stroke-width="0.9"/></g><g transform="translate(464.5 76.4)"><path d="M0.8 1 L3.3 3.6 L5.8 1" fill="none" stroke="#A6A4A2" stroke-width="0.9"/></g><g transform="translate(490.5 81.5)"><path d="M1.4 6 L6.6 0.9 L10.4 4.2 L5.2 9.6 Z M3.6 4 L7.6 7.4" fill="#EDEBE9" stroke="#A6A4A2" stroke-width="0.9"/></g><path d="M352.4 120.5 H359 M361 120.5 H367.6 M354.8 118.2 L352.4 120.5 L354.8 122.8 M365.2 118.2 L367.6 120.5 L365.2 122.8" fill="none" stroke="#A6A4A2" stroke-width="0.9"/><g transform="translate(371.5 113.5)"><path d="M1 1 L4.0 4 L7 1" fill="none" stroke="#9E9C9A" stroke-width="1.0"/></g><g transform="translate(408.0 113.5)"><path d="M1 1 L4.0 4 L7 1" fill="none" stroke="#9E9C9A" stroke-width="1.0"/></g><g transform="translate(433 106)"><path d="M3.5 10.5 L5 7 L11.5 1.5 L14.5 4.5 L8 10 L5.5 11.5 Z M5 7 L8 10" fill="none" stroke="#A6A4A2" stroke-width="1" stroke-linejoin="round"/><path d="M2 12.8 L4.2 10.8 L5.6 12.2 Z" fill="#A6A4A2"/></g><g transform="translate(454.4 113.9)"><path d="M1 1 L4.0 4 L7 1" fill="none" stroke="#9E9C9A" stroke-width="1.0"/></g><g transform="translate(491.5 113.9)"><path d="M1 1 L4.0 4 L7 1" fill="none" stroke="#9E9C9A" stroke-width="1.0"/></g><g transform="translate(523 75.5)"><path d="M4.5 2 H15 M4.5 8 H15 M4.5 14 H15" stroke="#A6A4A2" stroke-width="1"/><rect x="0" y="0.6" width="2.6" height="2.6" fill="#A6A4A2"/><rect x="0" y="6.6" width="2.6" height="2.6" fill="#A6A4A2"/><rect x="0" y="12.6" width="2.6" height="2.6" fill="#A6A4A2"/></g><g transform="translate(544.5 82.0)"><path d="M1 1 L4.0 4 L7 1" fill="none" stroke="#9E9C9A" stroke-width="1.0"/></g><g transform="translate(559 75)"><path d="M5.5 2.5 H16 M5.5 8.5 H16 M5.5 14.5 H16" stroke="#A6A4A2" stroke-width="1"/></g><g transform="translate(581.5 82.0)"><path d="M1 1 L4.0 4 L7 1" fill="none" stroke="#9E9C9A" stroke-width="1.0"/></g><g transform="translate(600.5 76)"><path d="M1 1.5 H15 M8 5.5 H15 M8 9.5 H15 M1 13.5 H15 M1 7.5 H6 M3.2 5.2 L1 7.5 L3.2 9.8" stroke="#A6A4A2" stroke-width="1" fill="none"/></g><g transform="translate(622.5 76)"><path d="M1 1.5 H15 M8 5.5 H15 M8 9.5 H15 M1 13.5 H15 M1 7.5 H6 M3.8 5.2 L6 7.5 L3.8 9.8" stroke="#A6A4A2" stroke-width="1" fill="none"/></g><path d="M654 77.5 H663.2 M654 81.5 H663.2 M654 85.5 H663.2 M654 89.5 H663.2 M649.5 76.6 V82 M647.4 78.8 L649.5 76.6 L651.6 78.8 M649.5 85 V90.4 M647.4 88.2 L649.5 90.4 L651.6 88.2" stroke="#A6A4A2" stroke-width="1" fill="none"/><g transform="translate(666.2 82.0)"><path d="M1 1 L4.0 4 L7 1" fill="none" stroke="#9E9C9A" stroke-width="1.0"/></g><path d="M687.5 68 V83.6 M685.2 81.2 L687.5 83.6 L689.8 81.2 M694.6 76.6 V83.6 M692.4 81.2 L694.6 83.6 L696.8 81.2" stroke="#858381" stroke-width="1" fill="none"/><g transform="translate(702.2 73.5)"><path d="M1 1 L4.0 4 L7 1" fill="none" stroke="#9E9C9A" stroke-width="1.0"/></g><g transform="translate(683 92)"><path d="M4.5 2.5 H1 V12.5 H4.5 M11.5 2.5 H15 V12.5 H11.5 M3.5 7.5 H12.5 M8 0.5 V5.5 M6 2.6 L8 0.5 L10 2.6 M8 9.5 V14.5 M6 12.4 L8 14.5 L10 12.4" stroke="#A6A4A2" stroke-width="1" fill="none"/></g><g transform="translate(702.2 97.5)"><path d="M1 1 L4.0 4 L7 1" fill="none" stroke="#9E9C9A" stroke-width="1.0"/></g><g transform="translate(683 117.5)"><path d="M1 1 H9.5 L13 4.5 H4.5 Z M4.5 4.5 L1 8 H5" stroke="#A6A4A2" stroke-width="1" fill="none"/><rect x="6.5" y="5.5" width="9.5" height="6.5" fill="#F3F2F1" stroke="#A6A4A2" stroke-width="1"/><path d="M8.5 7.8 H14 M8.5 9.8 H14" stroke="#A6A4A2" stroke-width="0.8"/></g><g transform="translate(702.2 121.5)"><path d="M1 1 L4.0 4 L7 1" fill="none" stroke="#9E9C9A" stroke-width="1.0"/></g><g transform="translate(524 108.5)"><path d="M0 1 H14 M0 5 H10 M0 9 H14 M0 13 H10 " stroke="#A6A4A2" stroke-width="1" fill="none"/></g><g transform="translate(546 108.5)"><path d="M0 1 H14 M2 5 H12 M0 9 H14 M2 13 H12 " stroke="#A6A4A2" stroke-width="1" fill="none"/></g><g transform="translate(568 108.5)"><path d="M0 1 H14 M4 5 H14 M0 9 H14 M4 13 H14 " stroke="#A6A4A2" stroke-width="1" fill="none"/></g><g transform="translate(590 108.5)"><path d="M0 1 H14 M0 5 H14 M0 9 H14 M0 13 H14 " stroke="#A6A4A2" stroke-width="1" fill="none"/></g><g transform="translate(622 111.5)"><path d="M0 1 H5 M7 1 H12 M0 4 H5 M7 4 H12 M0 7 H5 M7 7 H12 " stroke="#A6A4A2" stroke-width="1" fill="none"/></g><g transform="translate(639.5 113.5)"><path d="M1 1 L4.0 4 L7 1" fill="none" stroke="#9E9C9A" stroke-width="1.0"/></g><g transform="translate(738 68)"><rect x="1" y="1.2" width="18" height="18" fill="#83BBEB" stroke="#1E78CF" stroke-width="1.2"/><circle cx="19" cy="19" r="9.6" fill="#F3F2F1" stroke="#444" stroke-width="1.2"/></g><g transform="translate(748.5 122.7)"><path d="M1 1 L4.0 4 L7 1" fill="none" stroke="#444" stroke-width="1.15"/></g><g transform="translate(782 68)"><rect x="5.5" y="5.5" width="19" height="19" fill="#F8D99B" stroke="#E08A1E" stroke-width="1.2"/><rect x="1" y="1.2" width="11.4" height="11.4" fill="#F9F9F9" stroke="#444" stroke-width="1.2"/><rect x="17" y="17" width="11.4" height="11.4" fill="#F9F9F9" stroke="#444" stroke-width="1.2"/></g><g transform="translate(792.6 122.7)"><path d="M1 1 L4.0 4 L7 1" fill="none" stroke="#444" stroke-width="1.15"/></g><g transform="translate(829 68)"><rect x="1.5" y="1.5" width="26.5" height="26.5" fill="#E8E6E4" stroke="#C8C6C4" stroke-width="1"/><path d="M30.5 11 C27 15.5 22 22.5 19.2 25.6 L16.4 23.6 C19 20 25.5 13.5 30.5 11 Z" fill="#C4C2C0" stroke="#A6A4A2" stroke-width="0.9"/><path d="M16.4 23.4 C13.5 22.4 11.8 25.5 9 28.8 C13.5 30.2 18.2 29 19.2 25.6 Z" fill="#A6A4A2"/></g><g transform="translate(855.8 123.9)"><path d="M1 1 L4.0 4 L7 1" fill="none" stroke="#9E9C9A" stroke-width="1.0"/></g><g transform="translate(870 67)"><path d="M3.5 9 L9 3.5 L13 7.5 L7.5 12 Z M9 3.5 V1" fill="none" stroke="#A6A4A2" stroke-width="1" stroke-linejoin="round"/><path d="M13.2 8.2 C14 9.4 14.6 10 14.6 10.8 C14.6 12.4 12 12.4 12 10.8 C12 10 12.6 9.4 13.2 8.2 Z" fill="#A6A4A2"/></g><g transform="translate(941.7 74.0)"><path d="M1 1 L4.0 4 L7 1" fill="none" stroke="#9E9C9A" stroke-width="1.0"/></g><g transform="translate(870 90)"><path d="M11 1.5 H1.5 V11 H5 M5.5 11.5 L6.6 8 L13 2 L15.6 4.5 L9.2 10.4 Z" fill="none" stroke="#A6A4A2" stroke-width="1" stroke-linejoin="round"/></g><g transform="translate(965.6 97.0)"><path d="M1 1 L4.0 4 L7 1" fill="none" stroke="#9E9C9A" stroke-width="1.0"/></g><g transform="translate(869.5 115)"><path d="M1.5 8 L5.5 1.5 H16 L12.5 8 Z M1.5 8 V10.5 L3 12.5 H12.5 L16 5 V1.5 M12.5 8 V12.5" fill="#DDDBD9" stroke="#A6A4A2" stroke-width="1" stroke-linejoin="round"/></g><g transform="translate(961.2 120.0)"><path d="M1 1 L4.0 4 L7 1" fill="none" stroke="#9E9C9A" stroke-width="1.0"/></g><g transform="translate(997 66)"><circle cx="10.6" cy="6.6" r="5" fill="none" stroke="#444" stroke-width="1.1"/><path d="M7 10.4 L1.2 16.4" stroke="#444" stroke-width="1.2"/></g><g transform="translate(996.5 89)"><path d="M6.5 6.6 C3 6.2 1.2 8.5 1.6 10.8 C2 13 4 14 6.8 13.6 M4.8 11.4 L7.2 13.6 L5 16" fill="none" stroke="#2B88D8" stroke-width="1.1"/></g><g transform="translate(1067.5 96.5)"><path d="M1 1 L4.0 4 L7 1" fill="none" stroke="#444" stroke-width="1.15"/></g><g transform="translate(999 113)"><path d="M1.6 1.4 V13.2 L4.6 10.4 L6.8 15.2 L8.8 14.2 L6.6 9.6 H10.6 Z" fill="none" stroke="#444" stroke-width="1.1" stroke-linejoin="round"/></g><g transform="translate(1050.9 119.7)"><path d="M1 1 L4.0 4 L7 1" fill="none" stroke="#444" stroke-width="1.15"/></g><g transform="translate(1133 70)"><path d="M9 17 H3.2 V2.6 H12.5 L17.6 7.8 V10.5 M12.5 2.6 V7.8 H17.6" fill="none" stroke="#1473E6" stroke-width="1.7" stroke-linejoin="round"/><path d="M14.8 14.6 H11.6 V25.6 H24 V14.6 H20.8 M17.8 20.8 V10.8 M14.8 13.6 L17.8 10.6 L20.8 13.6" fill="none" stroke="#1473E6" stroke-width="1.7" stroke-linejoin="round"/></g><g transform="translate(1219 68)"><rect x="6" y="1.2" width="11.6" height="20.6" rx="2.2" fill="#83BBEB" stroke="#1E78CF" stroke-width="1.2"/><path d="M2.6 14.5 V17 C2.6 22 6 24.6 11.8 24.6 C17.6 24.6 21 22 21 17 V14.5 M11.8 24.6 V28.2 M7.6 28.4 H16" fill="none" stroke="#444" stroke-width="1.1"/></g><g transform="translate(1226.6 122.9)"><path d="M1 1 L4.0 4 L7 1" fill="none" stroke="#444" stroke-width="1.15"/></g></svg>
<div class="r" style="left:0px;top:714px;width:1300px;height:21px;background:#F3F2F1;"></div>
<div class="r" style="left:0px;top:713.5px;width:1300px;height:1px;background:#CFCDCB;"></div>
<span class="t" style="left:5.8px;top:719.2px;font-size:11.8px;color:#505050;transform:scaleX(0.9624);">Slide 19 of 49</span>
<span class="t" style="left:93.0px;top:719.9px;font-size:11.8px;color:#505050;transform:scaleX(0.9457);">Spanish (Spain)</span>
<span class="t" style="left:882.5px;top:719.2px;font-size:11.8px;color:#505050;transform:scaleX(0.9854);">Notes</span>
<div class="r" style="left:932px;top:714.5px;width:40px;height:20.5px;background:#C8C6C4;"></div>
<div class="r" style="left:1098px;top:724.6px;width:7.5px;height:1.1px;background:#505050;"></div>
<div class="r" style="left:1111px;top:725px;width:100px;height:1px;background:#9A9A9A;"></div>
<div class="r" style="left:1155.5px;top:719.6px;width:4px;height:11px;background:#767676;"></div>
<div class="r" style="left:1161px;top:721.6px;width:1px;height:7px;background:#9A9A9A;"></div>
<div class="r" style="left:1215.5px;top:724.6px;width:8px;height:1.1px;background:#505050;"></div>
<div class="r" style="left:1219px;top:721.1px;width:1.1px;height:8px;background:#505050;"></div>
<span class="t" style="left:1236.5px;top:719.2px;font-size:11.8px;color:#505050;transform:scaleX(0.9259);">92 %</span>
<svg class="r" style="left:0;top:0" width="1300" height="735" viewBox="0 0 1300 735"><g transform="translate(866 718.2)"><path d="M5.6 3.2 L8 1.2 L10.4 3.2 M1 5.5 H15 M1 8.5 H15 M1 11.5 H10" fill="none" stroke="#505050" stroke-width="1.1"/></g><g transform="translate(944 717.7)"><rect x="1" y="1.2" width="14" height="11" fill="none" stroke="#333" stroke-width="1.2"/><path d="M4 1.2 V12.2 M4 9 H15 M6.5 3.6 H12.6 V6.6 H6.5 Z" fill="none" stroke="#333" stroke-width="1.1"/></g><g transform="translate(984.5 718.7)"><path d="M1 1 H6 V5 H1 Z M8.6 1 H13.6 V5 H8.6 Z M1 7.6 H6 V11.6 H1 Z M8.6 7.6 H13.6 V11.6 H8.6 Z" fill="none" stroke="#505050" stroke-width="1.1"/></g><g transform="translate(1024 718.2)"><path d="M8 2.6 C6 1.2 3.5 1 1.2 1.4 V11.6 C3.5 11.2 6 11.4 8 12.8 C10 11.4 12.5 11.2 14.8 11.6 V1.4 C12.5 1 10 1.2 8 2.6 Z M8 2.6 V12.8" fill="none" stroke="#505050" stroke-width="1.1"/><path d="M3 4 H6 M3 6 H6 M3 8 H6 M10 4 H13 M10 6 H13 M10 8 H13" stroke="#505050" stroke-width="0.7"/></g><g transform="translate(1064.5 717.7)"><path d="M1 1.4 H14 M2.4 1.4 V8.4 H12.6 V1.4 M7.5 8.4 V13 M4.6 13.4 H10.4" fill="none" stroke="#505050" stroke-width="1.1"/></g><g transform="translate(1272 717.2)"><rect x="5" y="5" width="6" height="6" fill="none" stroke="#505050" stroke-width="1.1"/><path d="M5.6 3.2 L8 1 L10.4 3.2 M5.6 12.8 L8 15 L10.4 12.8 M3.2 5.6 L1 8 L3.2 10.4 M12.8 5.6 L15 8 L12.8 10.4" fill="none" stroke="#505050" stroke-width="1.1"/></g></svg>
</body></html>
